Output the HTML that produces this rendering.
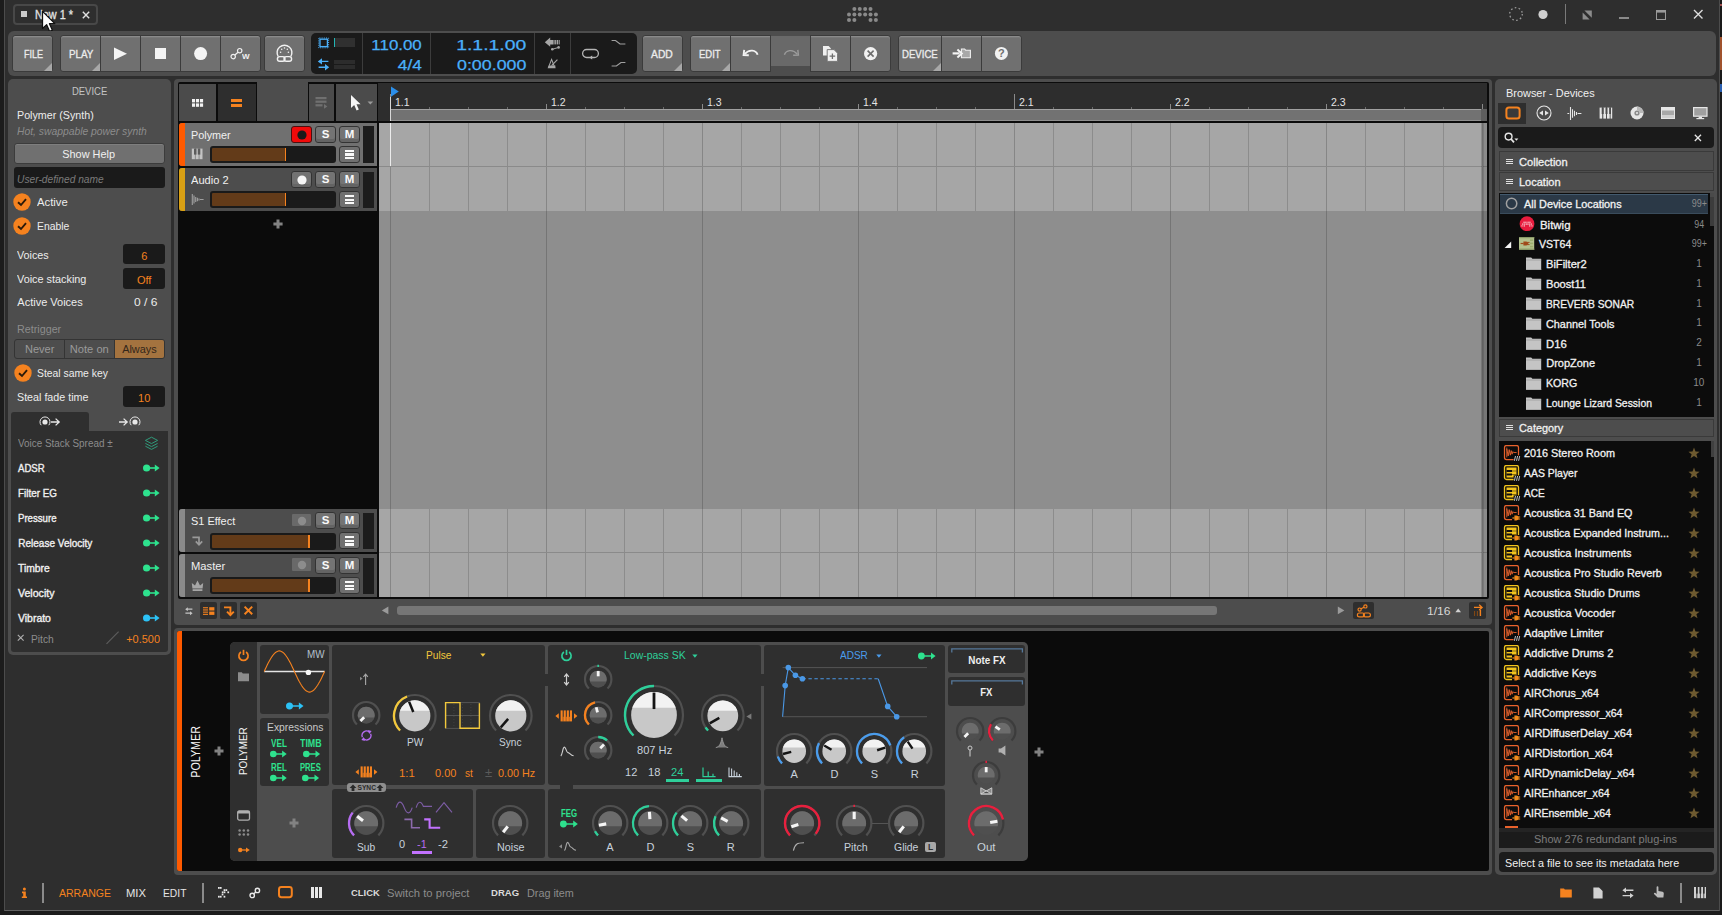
<!DOCTYPE html>
<html><head><meta charset="utf-8"><title>Bitwig Studio</title>
<style>
html,body{margin:0;padding:0;background:#1c1c1c;overflow:hidden;}
body{width:1722px;height:915px;position:relative;font-family:"Liberation Sans",sans-serif;}
#app div,#app span,#app svg{position:absolute;display:block;box-sizing:border-box;}
#app{position:absolute;left:0;top:0;width:1722px;height:915px;overflow:hidden;}
.t{white-space:nowrap;line-height:1;}
</style></head><body><div id="app">
<!-- frame -->
<div style="left:4px;top:0px;width:1716px;height:911px;background:#2e2e2e;border-left:1px solid #4c4c4c;border-bottom:1px solid #626262;border-right:1px solid #4c4c4c;"></div>
<div style="left:1720px;top:0px;width:2px;height:915px;background:#1a1a1a;"></div>
<div style="left:1720px;top:37px;width:2px;height:33px;background:#a0522d;"></div>
<div style="left:1720px;top:84px;width:2px;height:8px;background:#2a5fb0;"></div>
<div style="left:1720px;top:4px;width:2px;height:2px;background:#a05050;"></div>
<div style="left:13px;top:3.8px;width:85px;height:21.6px;background:transparent;border-radius:4px;border:2px solid #484848;"></div>
<div style="left:21px;top:11.3px;width:6.2px;height:5.9px;background:#cacaca;"></div>
<span class="t" style="top:8.52px;font-size:12px;color:#e4e4e4;left:35.00px;transform:scaleX(0.904);transform-origin:0 50%;-webkit-text-stroke:0.3px #e4e4e4;">New 1 *</span>
<svg style="left:82.4px;top:10.7px;" width="8" height="8" viewBox="0 0 8 8"><path d="M0.8 0.8L7.2 7.2M7.2 0.8L0.8 7.2" stroke="#e0e0e0" stroke-width="1.4" fill="none"/></svg>
<svg style="left:845px;top:5px;" width="36" height="20" viewBox="0 0 36 20"><g fill="#8a8a8a"><circle cx="9.38" cy="3.90" r="2"/><circle cx="14.76" cy="3.90" r="2"/><circle cx="20.14" cy="3.90" r="2"/><circle cx="25.52" cy="3.90" r="2"/><circle cx="4.00" cy="9.40" r="2"/><circle cx="9.38" cy="9.40" r="2"/><circle cx="14.76" cy="9.40" r="2"/><circle cx="20.14" cy="9.40" r="2"/><circle cx="25.52" cy="9.40" r="2"/><circle cx="30.90" cy="9.40" r="2"/><circle cx="4.00" cy="14.90" r="2"/><circle cx="9.38" cy="14.90" r="2"/><circle cx="25.52" cy="14.90" r="2"/><circle cx="30.90" cy="14.90" r="2"/></g></svg>
<svg style="left:1507px;top:5px;" width="18" height="18" viewBox="0 0 18 18"><circle cx="9" cy="9" r="6.3" fill="none" stroke="#9a9a9a" stroke-width="1.3" stroke-dasharray="1.6 2.35"/></svg>
<svg style="left:1537px;top:8px;" width="12" height="12" viewBox="0 0 12 12"><circle cx="6" cy="6.5" r="4.6" fill="#d0d0d0"/></svg>
<div style="left:1565px;top:4px;width:1px;height:20px;background:#7a7a7a;"></div>
<svg style="left:1581px;top:9px;" width="12" height="12" viewBox="0 0 12 12"><path d="M3.4 1.4H10.8V8.8Z" fill="#8c8c8c"/><path d="M1.6 3.6V10.6H8.6Z" fill="#8c8c8c"/></svg>
<div style="left:1619px;top:17px;width:10px;height:2px;background:#8a8a8a;"></div>
<svg style="left:1656px;top:10px;" width="11" height="11" viewBox="0 0 11 11"><rect x="0.5" y="0.5" width="9" height="9" fill="none" stroke="#9a9a9a" stroke-width="1"/><rect x="0" y="0" width="10" height="2.6" fill="#9a9a9a"/></svg>
<svg style="left:1693px;top:9px;" width="11" height="11" viewBox="0 0 11 11"><path d="M1 1L9.5 9.5M9.5 1L1 9.5" stroke="#dcdcdc" stroke-width="1.4" fill="none"/></svg>
<svg style="left:41px;top:10.4px;" width="16" height="24" viewBox="0 0 16 24"><g transform="translate(0.4,0.3) scale(1.12)"><path d="M1 1V16.2L4.7 12.8L7.3 18.8L9.8 17.7L7.2 11.9H12Z" fill="#fff" stroke="#111" stroke-width="1.1" stroke-linejoin="round"/></g></svg>
<!-- toolbar -->
<div style="left:8px;top:31px;width:1708px;height:45px;background:#4d4d4d;border-radius:6px;"></div>
<div style="left:12px;top:35px;width:41px;height:37px;background:#707070;border-radius:3px;border:1px solid #3b3b3b;box-shadow:inset 0 1px 0 #8a8a8a,inset 0 2px 0 #787878;"></div>
<svg style="left:44px;top:63px;" width="8" height="8" viewBox="0 0 8 8"><path d="M8 0V8H0Z" fill="#a8a8a8"/></svg>
<span class="t" style="top:49.50px;font-size:10px;color:#ececec;left:23.60px;transform:scaleX(0.900);transform-origin:0 50%;-webkit-text-stroke:0.3px #ececec;">FILE</span>
<div style="left:60px;top:35px;width:41px;height:37px;background:#707070;border-radius:3px 0 0 3px;border:1px solid #3b3b3b;box-shadow:inset 0 1px 0 #8a8a8a,inset 0 2px 0 #787878;"></div>
<svg style="left:92px;top:63px;" width="8" height="8" viewBox="0 0 8 8"><path d="M8 0V8H0Z" fill="#a8a8a8"/></svg>
<span class="t" style="top:49.50px;font-size:10px;color:#ececec;left:68.60px;transform:scaleX(0.983);transform-origin:0 50%;-webkit-text-stroke:0.3px #ececec;">PLAY</span>
<div style="left:100px;top:35px;width:41px;height:37px;background:#707070;border-radius:0;border:1px solid #3b3b3b;box-shadow:inset 0 1px 0 #8a8a8a,inset 0 2px 0 #787878;"></div>
<div style="left:140px;top:35px;width:41px;height:37px;background:#707070;border-radius:0;border:1px solid #3b3b3b;box-shadow:inset 0 1px 0 #8a8a8a,inset 0 2px 0 #787878;"></div>
<div style="left:180px;top:35px;width:41px;height:37px;background:#707070;border-radius:0;border:1px solid #3b3b3b;box-shadow:inset 0 1px 0 #8a8a8a,inset 0 2px 0 #787878;"></div>
<div style="left:220px;top:35px;width:41px;height:37px;background:#707070;border-radius:0 3px 3px 0;border:1px solid #3b3b3b;box-shadow:inset 0 1px 0 #8a8a8a,inset 0 2px 0 #787878;"></div>
<svg style="left:113px;top:46px;" width="16" height="16" viewBox="0 0 16 16"><path d="M1 1.6L14 7.8L1 14Z" fill="#f4f4f4"/></svg>
<div style="left:155.2px;top:48px;width:11.2px;height:11.2px;background:#f4f4f4;"></div>
<svg style="left:193px;top:46px;" width="16" height="16" viewBox="0 0 16 16"><circle cx="7.6" cy="7.6" r="6.5" fill="#f4f4f4"/></svg>
<svg style="left:229px;top:46px;" width="24" height="16" viewBox="0 0 24 16"><g fill="none" stroke="#f0f0f0" stroke-width="1.2"><circle cx="10.7" cy="4.7" r="2.2"/><circle cx="4.2" cy="10.6" r="2.2"/><path d="M5.9 9L9 6.3"/></g></svg>
<span class="t" style="top:52.88px;font-size:8px;color:#f0f0f0;font-weight:bold;left:242.30px;transform:scaleX(1.006);transform-origin:0 50%;">W</span>
<div style="left:264px;top:35px;width:41px;height:37px;background:#707070;border-radius:3px;border:1px solid #3b3b3b;box-shadow:inset 0 1px 0 #8a8a8a,inset 0 2px 0 #787878;"></div>
<svg style="left:275px;top:43px;" width="20" height="22" viewBox="0 0 20 22"><g fill="none" stroke="#f2f2f2" stroke-width="1.4"><path d="M3.2 13.5A7.4 7.4 0 1 1 15.8 13.5"/><rect x="2.4" y="13.6" width="7.6" height="4.6" rx="2.3"/><rect x="9" y="13.6" width="7.6" height="4.6" rx="2.3"/></g><g fill="#f2f2f2"><circle cx="5.6" cy="9.2" r="0.8"/><circle cx="6.7" cy="6.3" r="0.8"/><circle cx="9.5" cy="5" r="0.8"/><circle cx="12.3" cy="6.3" r="0.8"/><circle cx="13.4" cy="9.2" r="0.8"/></g></svg>
<div style="left:311px;top:33px;width:325.5px;height:41px;background:#1a1a1a;border-radius:5px;"></div>
<div style="left:362.1px;top:33px;width:1.0px;height:41px;background:#3c3c3c;"></div>
<div style="left:430.1px;top:33px;width:1.0px;height:41px;background:#3c3c3c;"></div>
<div style="left:534.3px;top:33px;width:1.0px;height:41px;background:#3c3c3c;"></div>
<div style="left:570.1px;top:33px;width:1.0px;height:41px;background:#3c3c3c;"></div>
<svg style="left:317px;top:36px;" width="14" height="14" viewBox="0 0 14 14"><rect x="3" y="3.2" width="7.4" height="7.4" fill="none" stroke="#4ab0fa" stroke-width="1.3"/><rect x="1.8" y="2" width="9.8" height="9.8" fill="none" stroke="#4ab0fa" stroke-width="1" stroke-dasharray="1 1.2" stroke-dashoffset="-0.6"/></svg>
<div style="left:334px;top:38px;width:21px;height:9px;background:#303030;"></div>
<div style="left:334px;top:38px;width:1.2px;height:9px;background:#22b5b5;"></div>
<svg style="left:317px;top:58px;" width="14" height="13" viewBox="0 0 14 13"><g fill="#4ab0fa"><path d="M0.8 3.4L5 0.2V2.7H11.4V4.1H5V6.6Z"/><path d="M12.2 9.2L8 6V8.5H1.6V9.9H8V12.4Z"/></g></svg>
<div style="left:334px;top:60.2px;width:21px;height:3.8px;background:#2c2c2c;"></div>
<div style="left:334px;top:65.1px;width:21px;height:3.9px;background:#2c2c2c;"></div>
<span class="t" style="top:36.95px;font-size:15px;color:#4ab0fa;left:377.23px;transform:scaleX(1.126);transform-origin:100% 50%;-webkit-text-stroke:0.25px #4ab0fa;">110.00</span>
<span class="t" style="top:57.25px;font-size:15px;color:#4ab0fa;left:400.55px;transform:scaleX(1.151);transform-origin:100% 50%;-webkit-text-stroke:0.25px #4ab0fa;">4/4</span>
<span class="t" style="top:36.95px;font-size:15px;color:#4ab0fa;left:471.79px;transform:scaleX(1.291);transform-origin:100% 50%;-webkit-text-stroke:0.25px #4ab0fa;">1.1.1.00</span>
<span class="t" style="top:57.25px;font-size:15px;color:#4ab0fa;left:467.61px;transform:scaleX(1.189);transform-origin:100% 50%;-webkit-text-stroke:0.25px #4ab0fa;">0:00.000</span>
<svg style="left:544px;top:36px;" width="18" height="16" viewBox="0 0 18 16"><g fill="#a6a6a6"><path d="M0.8 6.2L6.2 1.6V4H9.6V8.4H6.2V10.8Z"/><rect x="10.4" y="4" width="1.5" height="4.4"/><rect x="12.6" y="4" width="1.5" height="4.4"/><rect x="14.7" y="4" width="1" height="4.4"/><circle cx="8.3" cy="13.3" r="1.3"/><circle cx="14.6" cy="11.4" r="1.3"/></g><path d="M8.3 13.3L14.6 11.4" stroke="#a6a6a6" stroke-width="1"/></svg>
<svg style="left:547px;top:57px;" width="12" height="12" viewBox="0 0 12 12"><path d="M1.4 10.6L4.6 2.4L7.8 10.6Z" fill="none" stroke="#a6a6a6" stroke-width="1.1"/><path d="M1 10.8H8.4V8.6H1.8Z" fill="#a6a6a6"/><path d="M4.6 8.6L10.4 2.6" stroke="#a6a6a6" stroke-width="1.1"/></svg>
<svg style="left:581px;top:47px;" width="20" height="13" viewBox="0 0 20 13"><path d="M9 10.5H5.6A4 4 0 0 1 5.6 2.5H13.4A4 4 0 0 1 13.4 10.5H10" fill="none" stroke="#b4b4b4" stroke-width="1.3"/><path d="M8 10.6L11.2 8.4V12.6Z" fill="#b4b4b4"/></svg>
<svg style="left:611px;top:39px;" width="16" height="7" viewBox="0 0 16 7"><path d="M0.6 1.5H4.5L9 5H14.4" fill="none" stroke="#a0a0a0" stroke-width="1.2"/></svg>
<svg style="left:611px;top:61px;" width="16" height="7" viewBox="0 0 16 7"><path d="M0.6 5H5.4L10 1.5H14.4" fill="none" stroke="#a0a0a0" stroke-width="1.2"/></svg>
<div style="left:642px;top:35px;width:41px;height:37px;background:#707070;border-radius:3px;border:1px solid #3b3b3b;box-shadow:inset 0 1px 0 #8a8a8a,inset 0 2px 0 #787878;"></div>
<svg style="left:674px;top:63px;" width="8" height="8" viewBox="0 0 8 8"><path d="M8 0V8H0Z" fill="#a8a8a8"/></svg>
<span class="t" style="top:49.50px;font-size:10px;color:#ececec;left:651.30px;transform:scaleX(1.032);transform-origin:0 50%;-webkit-text-stroke:0.3px #ececec;">ADD</span>
<div style="left:690px;top:35px;width:41px;height:37px;background:#707070;border-radius:3px 0 0 3px;border:1px solid #3b3b3b;box-shadow:inset 0 1px 0 #8a8a8a,inset 0 2px 0 #787878;"></div>
<svg style="left:722px;top:63px;" width="8" height="8" viewBox="0 0 8 8"><path d="M8 0V8H0Z" fill="#a8a8a8"/></svg>
<span class="t" style="top:49.50px;font-size:10px;color:#ececec;left:699.40px;transform:scaleX(0.948);transform-origin:0 50%;-webkit-text-stroke:0.3px #ececec;">EDIT</span>
<div style="left:730px;top:35px;width:41px;height:37px;background:#707070;border-radius:0;border:1px solid #3b3b3b;box-shadow:inset 0 1px 0 #8a8a8a,inset 0 2px 0 #787878;"></div>
<div style="left:771px;top:36px;width:39px;height:30px;background:#696969;"></div>
<div style="left:810px;top:35px;width:41px;height:37px;background:#707070;border-radius:0;border:1px solid #3b3b3b;box-shadow:inset 0 1px 0 #8a8a8a,inset 0 2px 0 #787878;"></div>
<div style="left:850px;top:35px;width:41px;height:37px;background:#707070;border-radius:0 3px 3px 0;border:1px solid #3b3b3b;box-shadow:inset 0 1px 0 #8a8a8a,inset 0 2px 0 #787878;"></div>
<svg style="left:741px;top:46px;" width="20" height="14" viewBox="0 0 20 14"><path d="M16.6 8.8C15 4.2 8.4 2.6 3.6 8.2" fill="none" stroke="#f2f2f2" stroke-width="1.9"/><path d="M3.2 3.8L2.6 9L7.8 9.2" fill="none" stroke="#f2f2f2" stroke-width="1.9"/></svg>
<svg style="left:781px;top:46px;" width="20" height="14" viewBox="0 0 20 14"><path d="M3.4 8.8C5 4.2 11.6 2.6 16.4 8.2" fill="none" stroke="#9c9c9c" stroke-width="1.4"/><path d="M16.8 3.8L17.4 9L12.2 9.2" fill="none" stroke="#9c9c9c" stroke-width="1.4"/></svg>
<svg style="left:822px;top:45px;" width="18" height="18" viewBox="0 0 18 18"><path d="M1 1H6.6L9 3.4V10.5H1Z" fill="#f0f0f0"/><path d="M5.2 4.6H12L15.6 8.2V16.4H5.2Z" fill="#f0f0f0" stroke="#6f6f6f" stroke-width="0.9"/><path d="M10.4 8.4V14M7.6 11.2H13.2" stroke="#6f6f6f" stroke-width="1.3"/></svg>
<svg style="left:863px;top:46px;" width="16" height="16" viewBox="0 0 16 16"><circle cx="7.6" cy="7.6" r="6.6" fill="#f2f2f2"/><path d="M4.6 4.6L10.6 10.6M10.6 4.6L4.6 10.6" stroke="#6f6f6f" stroke-width="1.6"/></svg>
<div style="left:898px;top:35px;width:44px;height:37px;background:#707070;border-radius:3px 0 0 3px;border:1px solid #3b3b3b;box-shadow:inset 0 1px 0 #8a8a8a,inset 0 2px 0 #787878;"></div>
<svg style="left:933px;top:63px;" width="8" height="8" viewBox="0 0 8 8"><path d="M8 0V8H0Z" fill="#a8a8a8"/></svg>
<span class="t" style="top:49.50px;font-size:10px;color:#ececec;left:902.30px;transform:scaleX(0.959);transform-origin:0 50%;-webkit-text-stroke:0.3px #ececec;">DEVICE</span>
<div style="left:941px;top:35px;width:41px;height:37px;background:#707070;border-radius:0;border:1px solid #3b3b3b;box-shadow:inset 0 1px 0 #8a8a8a,inset 0 2px 0 #787878;"></div>
<div style="left:981px;top:35px;width:41px;height:37px;background:#707070;border-radius:0 3px 3px 0;border:1px solid #3b3b3b;box-shadow:inset 0 1px 0 #8a8a8a,inset 0 2px 0 #787878;"></div>
<svg style="left:951px;top:46px;" width="22" height="14" viewBox="0 0 22 14"><path d="M10.4 3H13.6L14.6 4.2H19.4V11.8H10.4Z" fill="#a8a8a8" stroke="#f0f0f0" stroke-width="1.1"/><path d="M1.6 7.4H8.6" stroke="#f4f4f4" stroke-width="2.2"/><path d="M6.4 3.4L10.8 7.4L6.4 11.4" fill="none" stroke="#f4f4f4" stroke-width="2"/></svg>
<svg style="left:994px;top:46px;" width="16" height="16" viewBox="0 0 16 16"><circle cx="7.4" cy="7.4" r="6.5" fill="#f2f2f2"/></svg>
<span class="t" style="top:48.21px;font-size:11px;color:#6f6f6f;font-weight:bold;left:998.04px;">?</span>
<!-- left -->
<div style="left:8px;top:79px;width:163px;height:576px;background:#4d4d4d;border-radius:5px;"></div>
<span class="t" style="top:86.70px;font-size:10px;color:#c4c4c4;left:71.38px;transform:scaleX(0.951);transform-origin:50% 50%;">DEVICE</span>
<span class="t" style="top:109.61px;font-size:11px;color:#ececec;left:17.30px;transform:scaleX(0.973);transform-origin:0 50%;">Polymer (Synth)</span>
<span class="t" style="top:125.61px;font-size:11px;color:#8c8c8c;font-style:italic;left:17.30px;transform:scaleX(0.939);transform-origin:0 50%;">Hot, swappable power synth</span>
<div style="left:14px;top:143px;width:151px;height:21px;background:#707070;border-radius:3px;border:1px solid #3c3c3c;box-shadow:inset 0 1px 0 #7e7e7e;"></div>
<span class="t" style="top:148.61px;font-size:11px;color:#f0f0f0;left:61.90px;transform:scaleX(0.991);transform-origin:50% 50%;">Show Help</span>
<div style="left:14px;top:167.2px;width:151px;height:20.6px;background:#1a1a1a;border-radius:3px;"></div>
<span class="t" style="top:173.61px;font-size:11px;color:#7a7a7a;font-style:italic;left:17.30px;transform:scaleX(0.929);transform-origin:0 50%;">User-defined name</span>
<svg style="left:13.399999999999999px;top:192.7px;" width="18" height="18" viewBox="0 0 18 18"><circle cx="9" cy="9" r="8.7" fill="#f5821f"/><path d="M5 9.2L8 12L13 6.2" fill="none" stroke="#2a1a0a" stroke-width="1.9"/></svg>
<span class="t" style="top:196.61px;font-size:11px;color:#ececec;left:37.00px;transform:scaleX(1.025);transform-origin:0 50%;">Active</span>
<svg style="left:13.399999999999999px;top:216.7px;" width="18" height="18" viewBox="0 0 18 18"><circle cx="9" cy="9" r="8.7" fill="#f5821f"/><path d="M5 9.2L8 12L13 6.2" fill="none" stroke="#2a1a0a" stroke-width="1.9"/></svg>
<span class="t" style="top:220.61px;font-size:11px;color:#ececec;left:37.00px;transform:scaleX(0.943);transform-origin:0 50%;">Enable</span>
<span class="t" style="top:249.91px;font-size:11px;color:#ececec;left:17.30px;transform:scaleX(0.978);transform-origin:0 50%;">Voices</span>
<div style="left:123.2px;top:244.2px;width:41.6px;height:20.3px;background:#1a1a1a;border-radius:3px;"></div>
<span class="t" style="top:250.61px;font-size:11px;color:#f5821f;left:141.14px;">6</span>
<span class="t" style="top:274.01px;font-size:11px;color:#ececec;left:17.30px;transform:scaleX(0.987);transform-origin:0 50%;">Voice stacking</span>
<div style="left:123.2px;top:268.2px;width:41.6px;height:20.4px;background:#1a1a1a;border-radius:3px;"></div>
<span class="t" style="top:274.61px;font-size:11px;color:#f5821f;left:136.96px;">Off</span>
<span class="t" style="top:296.61px;font-size:11px;color:#ececec;left:17.30px;">Active Voices</span>
<span class="t" style="top:296.61px;font-size:11px;color:#ececec;left:133.80px;transform:scaleX(1.093);transform-origin:0 50%;">0 / 6</span>
<span class="t" style="top:323.61px;font-size:11px;color:#8c8c8c;left:17.30px;transform:scaleX(0.977);transform-origin:0 50%;">Retrigger</span>
<div style="left:14.2px;top:338.7px;width:150.6px;height:20.0px;background:#4d4d4d;border-radius:3px;border:1px solid #343434;"></div>
<div style="left:114.7px;top:339.7px;width:49.1px;height:18.0px;background:#a4733f;border-radius:0 2px 2px 0;"></div>
<div style="left:64.2px;top:339.7px;width:1.0px;height:18.0px;background:#343434;"></div>
<div style="left:114.2px;top:339.7px;width:1.0px;height:18.0px;background:#343434;"></div>
<span class="t" style="top:343.61px;font-size:11px;color:#9a9a9a;left:25.33px;transform:scaleX(1.005);transform-origin:50% 50%;">Never</span>
<span class="t" style="top:343.61px;font-size:11px;color:#9a9a9a;left:70.24px;transform:scaleX(1.012);transform-origin:50% 50%;">Note on</span>
<span class="t" style="top:343.61px;font-size:11px;color:#33261a;left:121.88px;transform:scaleX(0.990);transform-origin:50% 50%;">Always</span>
<svg style="left:13.5px;top:364px;" width="18" height="18" viewBox="0 0 18 18"><circle cx="9" cy="9" r="8.7" fill="#f5821f"/><path d="M5 9.2L8 12L13 6.2" fill="none" stroke="#2a1a0a" stroke-width="1.9"/></svg>
<span class="t" style="top:367.61px;font-size:11px;color:#ececec;left:37.40px;transform:scaleX(0.943);transform-origin:0 50%;">Steal same key</span>
<span class="t" style="top:391.81px;font-size:11px;color:#ececec;left:17.30px;transform:scaleX(0.974);transform-origin:0 50%;">Steal fade time</span>
<div style="left:123.2px;top:386.2px;width:41.6px;height:20.6px;background:#1a1a1a;border-radius:3px;"></div>
<span class="t" style="top:392.61px;font-size:11px;color:#f5821f;left:138.08px;">10</span>
<div style="left:11px;top:412px;width:78px;height:20px;background:#2f2f2f;border-radius:3px 3px 0 0;"></div>
<div style="left:11px;top:431px;width:157px;height:220.5px;background:#2f2f2f;border-radius:0 0 3px 3px;"></div>
<svg style="left:39px;top:415px;" width="24" height="14" viewBox="0 0 24 14"><circle cx="6" cy="7" r="2.6" fill="#e8e8e8"/><path d="M2.2 10.2A5 5 0 1 1 9.8 10.2" fill="none" stroke="#e8e8e8" stroke-width="1"/><path d="M12 7H20M16.6 3.6L20.2 7L16.6 10.4" fill="none" stroke="#e8e8e8" stroke-width="1.3"/></svg>
<svg style="left:117px;top:415px;" width="24" height="14" viewBox="0 0 24 14"><circle cx="18" cy="7" r="2.6" fill="#e8e8e8"/><path d="M14.2 10.2A5 5 0 1 1 21.8 10.2" fill="none" stroke="#e8e8e8" stroke-width="1"/><path d="M2 7H10M6.6 3.6L10.2 7L6.6 10.4" fill="none" stroke="#e8e8e8" stroke-width="1.3"/></svg>
<span class="t" style="top:438.60px;font-size:10px;color:#8c8c8c;left:18.40px;transform:scaleX(0.990);transform-origin:0 50%;">Voice Stack Spread ±</span>
<svg style="left:144px;top:436px;" width="15" height="15" viewBox="0 0 15 15"><g fill="none" stroke="#2f9a7a" stroke-width="1"><path d="M7.5 1.2L13.6 4.4L7.5 7.6L1.4 4.4Z"/><path d="M1.4 7.4L7.5 10.6L13.6 7.4"/><path d="M1.4 10.2L7.5 13.4L13.6 10.2"/></g></svg>
<span class="t" style="top:463.50px;font-size:10px;color:#f0f0f0;left:18.30px;transform:scaleX(0.961);transform-origin:0 50%;-webkit-text-stroke:0.35px #f0f0f0;">ADSR</span>
<svg style="left:142px;top:462.79999999999995px;" width="20" height="10" viewBox="0 0 20 10"><circle cx="4.6" cy="5" r="3.6" fill="#2ee28e"/><path d="M7 5H14" fill="none" stroke="#2ee28e" stroke-width="1.6"/><path d="M12.8 1.5L17.6 5L12.8 8.5Z" fill="#2ee28e"/></svg>
<span class="t" style="top:488.50px;font-size:10px;color:#f0f0f0;left:18.30px;transform:scaleX(0.986);transform-origin:0 50%;-webkit-text-stroke:0.35px #f0f0f0;">Filter EG</span>
<svg style="left:142px;top:487.79999999999995px;" width="20" height="10" viewBox="0 0 20 10"><circle cx="4.6" cy="5" r="3.6" fill="#2ee28e"/><path d="M7 5H14" fill="none" stroke="#2ee28e" stroke-width="1.6"/><path d="M12.8 1.5L17.6 5L12.8 8.5Z" fill="#2ee28e"/></svg>
<span class="t" style="top:513.70px;font-size:10px;color:#f0f0f0;left:18.30px;transform:scaleX(0.962);transform-origin:0 50%;-webkit-text-stroke:0.35px #f0f0f0;">Pressure</span>
<svg style="left:142px;top:513.0px;" width="20" height="10" viewBox="0 0 20 10"><circle cx="4.6" cy="5" r="3.6" fill="#2ee28e"/><path d="M7 5H14" fill="none" stroke="#2ee28e" stroke-width="1.6"/><path d="M12.8 1.5L17.6 5L12.8 8.5Z" fill="#2ee28e"/></svg>
<span class="t" style="top:538.80px;font-size:10px;color:#f0f0f0;left:18.30px;-webkit-text-stroke:0.35px #f0f0f0;">Release Velocity</span>
<svg style="left:142px;top:538.1px;" width="20" height="10" viewBox="0 0 20 10"><circle cx="4.6" cy="5" r="3.6" fill="#2ee28e"/><path d="M7 5H14" fill="none" stroke="#2ee28e" stroke-width="1.6"/><path d="M12.8 1.5L17.6 5L12.8 8.5Z" fill="#2ee28e"/></svg>
<span class="t" style="top:563.80px;font-size:10px;color:#f0f0f0;left:18.30px;transform:scaleX(1.031);transform-origin:0 50%;-webkit-text-stroke:0.35px #f0f0f0;">Timbre</span>
<svg style="left:142px;top:563.1px;" width="20" height="10" viewBox="0 0 20 10"><circle cx="4.6" cy="5" r="3.6" fill="#2ee28e"/><path d="M7 5H14" fill="none" stroke="#2ee28e" stroke-width="1.6"/><path d="M12.8 1.5L17.6 5L12.8 8.5Z" fill="#2ee28e"/></svg>
<span class="t" style="top:588.50px;font-size:10px;color:#f0f0f0;left:18.30px;transform:scaleX(1.059);transform-origin:0 50%;-webkit-text-stroke:0.35px #f0f0f0;">Velocity</span>
<svg style="left:142px;top:587.8px;" width="20" height="10" viewBox="0 0 20 10"><circle cx="4.6" cy="5" r="3.6" fill="#2ee28e"/><path d="M7 5H14" fill="none" stroke="#2ee28e" stroke-width="1.6"/><path d="M12.8 1.5L17.6 5L12.8 8.5Z" fill="#2ee28e"/></svg>
<span class="t" style="top:613.60px;font-size:10px;color:#f0f0f0;left:18.30px;transform:scaleX(1.044);transform-origin:0 50%;-webkit-text-stroke:0.35px #f0f0f0;">Vibrato</span>
<svg style="left:142px;top:612.9px;" width="20" height="10" viewBox="0 0 20 10"><circle cx="4.6" cy="5" r="3.6" fill="#2cc2f6"/><path d="M7 5H14" fill="none" stroke="#2cc2f6" stroke-width="1.6"/><path d="M12.8 1.5L17.6 5L12.8 8.5Z" fill="#2cc2f6"/></svg>
<svg style="left:17px;top:634px;" width="8" height="8" viewBox="0 0 8 8"><path d="M0.8 0.8L6.6 6.6M6.6 0.8L0.8 6.6" stroke="#b0b0b0" stroke-width="1.1"/></svg>
<span class="t" style="top:633.51px;font-size:11px;color:#8c8c8c;left:31.30px;transform:scaleX(0.932);transform-origin:0 50%;">Pitch</span>
<svg style="left:105px;top:630px;" width="16" height="16" viewBox="0 0 16 16"><path d="M1.5 13.8L13.6 1.6" stroke="#5c5c5c" stroke-width="1.2"/></svg>
<span class="t" style="top:633.51px;font-size:11px;color:#f5821f;left:126.45px;transform:scaleX(0.993);transform-origin:100% 50%;">+0.500</span>
<!-- arranger -->
<div style="left:174.4px;top:78.6px;width:1317.6px;height:546.4px;background:#4d4d4d;border-radius:4px;"></div>
<div style="left:177.9px;top:82px;width:1311.5px;height:517px;background:#0b0b0b;border-radius:2px;"></div>
<div style="left:179px;top:84px;width:37.3px;height:36.6px;background:#4b4b4b;"></div>
<div style="left:218px;top:84px;width:37.8px;height:36.6px;background:#2e2e2e;"></div>
<div style="left:257px;top:80px;width:50.5px;height:40.6px;background:#4d4d4d;"></div>
<div style="left:309px;top:84px;width:25.2px;height:36.6px;background:#4b4b4b;"></div>
<div style="left:335.8px;top:84px;width:41.2px;height:36.6px;background:#4b4b4b;"></div>
<svg style="left:192px;top:98.6px;" width="12" height="9" viewBox="0 0 12 9"><g fill="#f2f2f2"><rect x="0" y="0.0" width="3.1" height="3.4"/><rect x="4" y="0.0" width="3.1" height="3.4"/><rect x="8" y="0.0" width="3.1" height="3.4"/><rect x="0" y="4.4" width="3.1" height="3.4"/><rect x="4" y="4.4" width="3.1" height="3.4"/><rect x="8" y="4.4" width="3.1" height="3.4"/></g></svg>
<div style="left:231px;top:99px;width:11.2px;height:2.7px;background:#f5821f;"></div>
<div style="left:231px;top:104px;width:11.2px;height:2.7px;background:#f5821f;"></div>
<svg style="left:315px;top:96px;" width="14" height="14" viewBox="0 0 14 14"><g fill="#707070"><rect x="0.5" y="1" width="11" height="2.2"/><rect x="0.5" y="4.6" width="11" height="2.2"/><rect x="0.5" y="8.2" width="7" height="2.2"/><path d="M9 8L12.4 10.4L9 12.8Z"/></g></svg>
<svg style="left:350px;top:94px;" width="13" height="19" viewBox="0 0 13 19"><path d="M1 1V14L4.2 11L6.6 16.4L8.8 15.4L6.5 10.2H10.6Z" fill="#f6f6f6"/></svg>
<svg style="left:367px;top:100.5px;" width="7" height="4" viewBox="0 0 7 4"><path d="M0.5 0.5H6.2L3.35 3.4Z" fill="#9a9a9a"/></svg>
<div style="left:378.4px;top:83.3px;width:1108.6px;height:37.7px;background:#2d2d2d;"></div>
<div style="left:390px;top:94px;width:1px;height:15px;background:#8a8a8a;"></div>
<div style="left:429px;top:106.6px;width:1px;height:2.4px;background:#6a6a6a;"></div>
<div style="left:468px;top:106.6px;width:1px;height:2.4px;background:#6a6a6a;"></div>
<div style="left:507px;top:106.6px;width:1px;height:2.4px;background:#6a6a6a;"></div>
<div style="left:546px;top:104px;width:1px;height:5px;background:#8a8a8a;"></div>
<div style="left:585px;top:106.6px;width:1px;height:2.4px;background:#6a6a6a;"></div>
<div style="left:624px;top:106.6px;width:1px;height:2.4px;background:#6a6a6a;"></div>
<div style="left:663px;top:106.6px;width:1px;height:2.4px;background:#6a6a6a;"></div>
<div style="left:702px;top:104px;width:1px;height:5px;background:#8a8a8a;"></div>
<div style="left:741px;top:106.6px;width:1px;height:2.4px;background:#6a6a6a;"></div>
<div style="left:780px;top:106.6px;width:1px;height:2.4px;background:#6a6a6a;"></div>
<div style="left:819px;top:106.6px;width:1px;height:2.4px;background:#6a6a6a;"></div>
<div style="left:858px;top:104px;width:1px;height:5px;background:#8a8a8a;"></div>
<div style="left:897px;top:106.6px;width:1px;height:2.4px;background:#6a6a6a;"></div>
<div style="left:936px;top:106.6px;width:1px;height:2.4px;background:#6a6a6a;"></div>
<div style="left:975px;top:106.6px;width:1px;height:2.4px;background:#6a6a6a;"></div>
<div style="left:1014px;top:94px;width:1px;height:15px;background:#8a8a8a;"></div>
<div style="left:1053px;top:106.6px;width:1px;height:2.4px;background:#6a6a6a;"></div>
<div style="left:1092px;top:106.6px;width:1px;height:2.4px;background:#6a6a6a;"></div>
<div style="left:1131px;top:106.6px;width:1px;height:2.4px;background:#6a6a6a;"></div>
<div style="left:1170px;top:104px;width:1px;height:5px;background:#8a8a8a;"></div>
<div style="left:1209px;top:106.6px;width:1px;height:2.4px;background:#6a6a6a;"></div>
<div style="left:1248px;top:106.6px;width:1px;height:2.4px;background:#6a6a6a;"></div>
<div style="left:1287px;top:106.6px;width:1px;height:2.4px;background:#6a6a6a;"></div>
<div style="left:1326px;top:104px;width:1px;height:5px;background:#8a8a8a;"></div>
<div style="left:1365px;top:106.6px;width:1px;height:2.4px;background:#6a6a6a;"></div>
<div style="left:1404px;top:106.6px;width:1px;height:2.4px;background:#6a6a6a;"></div>
<div style="left:1443px;top:106.6px;width:1px;height:2.4px;background:#6a6a6a;"></div>
<div style="left:1482px;top:104px;width:1px;height:5px;background:#8a8a8a;"></div>
<div style="left:391px;top:109px;width:1096px;height:11.6px;background:#727272;border-radius:0;border-top:1px solid #a0a0a0;border-bottom:1px solid #8e8e8e;"></div>
<div style="left:1480.5px;top:109px;width:6.5px;height:11.6px;background:#5e5e5e;"></div>
<span class="t" style="top:97.11px;font-size:11px;color:#e4e4e4;left:394.50px;transform:scaleX(0.955);transform-origin:0 50%;">1.1</span>
<span class="t" style="top:97.11px;font-size:11px;color:#e4e4e4;left:550.50px;transform:scaleX(0.955);transform-origin:0 50%;">1.2</span>
<span class="t" style="top:97.11px;font-size:11px;color:#e4e4e4;left:706.50px;transform:scaleX(0.955);transform-origin:0 50%;">1.3</span>
<span class="t" style="top:97.11px;font-size:11px;color:#e4e4e4;left:862.50px;transform:scaleX(0.955);transform-origin:0 50%;">1.4</span>
<span class="t" style="top:97.11px;font-size:11px;color:#e4e4e4;left:1018.50px;transform:scaleX(0.955);transform-origin:0 50%;">2.1</span>
<span class="t" style="top:97.11px;font-size:11px;color:#e4e4e4;left:1174.50px;transform:scaleX(0.955);transform-origin:0 50%;">2.2</span>
<span class="t" style="top:97.11px;font-size:11px;color:#e4e4e4;left:1330.50px;transform:scaleX(0.955);transform-origin:0 50%;">2.3</span>
<svg style="left:390px;top:86px;" width="10" height="12" viewBox="0 0 10 12"><path d="M1 0.6L8.8 5.6L1 10.8Z" fill="#2b8fea"/></svg>
<div style="left:379px;top:123px;width:1108px;height:43.400000000000006px;background:linear-gradient(90deg,#868686 0,#868686 1px,transparent 1px) 11px 0/156px 100% repeat-x,linear-gradient(90deg,#8c8c8c 0,#8c8c8c 1px,transparent 1px) 11px 0/39px 100% repeat-x,#a6a6a6;"></div>
<div style="left:379px;top:166.4px;width:1108px;height:1.0px;background:#8a8a8a;"></div>
<div style="left:379px;top:167.4px;width:1108px;height:43.599999999999994px;background:linear-gradient(90deg,#868686 0,#868686 1px,transparent 1px) 11px 0/156px 100% repeat-x,linear-gradient(90deg,#8c8c8c 0,#8c8c8c 1px,transparent 1px) 11px 0/39px 100% repeat-x,#a6a6a6;"></div>
<div style="left:379px;top:211px;width:1108px;height:297.8px;background:linear-gradient(90deg,#757575 0,#757575 1px,transparent 1px) 11px 0/156px 100% repeat-x,#8e8e8e;"></div>
<div style="left:379px;top:508.8px;width:1108px;height:43.19999999999999px;background:linear-gradient(90deg,#868686 0,#868686 1px,transparent 1px) 11px 0/156px 100% repeat-x,linear-gradient(90deg,#8c8c8c 0,#8c8c8c 1px,transparent 1px) 11px 0/39px 100% repeat-x,#a6a6a6;"></div>
<div style="left:379px;top:552px;width:1108px;height:1px;background:#8a8a8a;"></div>
<div style="left:379px;top:553px;width:1108px;height:43.799999999999955px;background:linear-gradient(90deg,#868686 0,#868686 1px,transparent 1px) 11px 0/156px 100% repeat-x,linear-gradient(90deg,#8c8c8c 0,#8c8c8c 1px,transparent 1px) 11px 0/39px 100% repeat-x,#a6a6a6;"></div>
<div style="left:1480.5px;top:123px;width:6.5px;height:473.8px;background:rgba(0,0,0,0.16);"></div>
<div style="left:1483px;top:123px;width:1px;height:473.8px;background:rgba(0,0,0,0.12);"></div>
<div style="left:390.2px;top:97px;width:1.2px;height:23.6px;background:#d8d8d8;"></div>
<div style="left:390.2px;top:123px;width:1.2px;height:43.4px;background:#ececec;"></div>
<div style="left:179px;top:123px;width:198.3px;height:43px;background:#707070;border-radius:3px 0 0 3px;"></div>
<div style="left:179px;top:123px;width:6.2px;height:43px;background:#ff5a00;border-radius:3px 0 0 3px;"></div>
<span class="t" style="top:130.11px;font-size:11px;color:#f0f0f0;left:191.20px;transform:scaleX(0.984);transform-origin:0 50%;">Polymer</span>
<div style="left:291px;top:126px;width:21px;height:17px;background:#f20a0a;border-radius:3px;border:1px solid #4a1010;"></div>
<svg style="left:296.5px;top:129.5px;" width="10" height="10" viewBox="0 0 10 10"><circle cx="5" cy="5" r="4.6" fill="#1a1a1a"/></svg>
<div style="left:315px;top:126px;width:21px;height:17px;background:#747474;border-radius:3px;border:1px solid #333;box-shadow:inset 0 -3px 0 #646464;"></div>
<span class="t" style="top:128.87px;font-size:11.5px;color:#fafafa;font-weight:bold;left:321.66px;">S</span>
<div style="left:339px;top:126px;width:21px;height:17px;background:#747474;border-radius:3px;border:1px solid #333;box-shadow:inset 0 -3px 0 #646464;"></div>
<span class="t" style="top:128.87px;font-size:11.5px;color:#fafafa;font-weight:bold;left:344.71px;">M</span>
<div style="left:363.2px;top:126.4px;width:10.8px;height:36.6px;background:#1c1c1c;"></div>
<div style="left:210px;top:146.2px;width:126px;height:17.0px;background:#1a1a1a;border-radius:3px;"></div>
<div style="left:212px;top:148.2px;width:74.2px;height:13.0px;background:#633b19;border-radius:1px;"></div>
<div style="left:284.75px;top:148.2px;width:1.45px;height:13.0px;background:#f5821f;"></div>
<div style="left:339px;top:146px;width:21px;height:17px;background:#707070;border-radius:3px;border:1px solid #333;"></div>
<div style="left:344.7px;top:149.85px;width:9.6px;height:2.1px;background:#fafafa;"></div>
<div style="left:344.7px;top:153.45px;width:9.6px;height:2.1px;background:#fafafa;"></div>
<div style="left:344.7px;top:157.04999999999998px;width:9.6px;height:2.1px;background:#fafafa;"></div>
<svg style="left:191px;top:147.5px;" width="14" height="14" viewBox="0 0 14 14"><g fill="#c4c4c4"><rect x="0.8" y="0.6" width="3.1" height="10.6"/><rect x="4.6" y="0.6" width="3.1" height="10.6"/><rect x="8.4" y="0.6" width="3.1" height="10.6"/></g><g fill="#5c5c5c"><rect x="3" y="0.6" width="2.5" height="6"/><rect x="6.8" y="0.6" width="2.5" height="6"/></g></svg>
<div style="left:179px;top:168.2px;width:198.3px;height:43.0px;background:#4d4d4d;border-radius:3px 0 0 3px;"></div>
<div style="left:179px;top:168.2px;width:6.2px;height:43.0px;background:#d9a014;border-radius:3px 0 0 3px;"></div>
<span class="t" style="top:174.71px;font-size:11px;color:#f0f0f0;left:191.20px;transform:scaleX(1.008);transform-origin:0 50%;">Audio 2</span>
<div style="left:291px;top:171.2px;width:21px;height:17.0px;background:#727272;border-radius:3px;border:1px solid #333;box-shadow:inset 0 -3px 0 #666;"></div>
<svg style="left:296.5px;top:174.7px;" width="10" height="10" viewBox="0 0 10 10"><circle cx="5" cy="5" r="4.6" fill="#f6f6f6"/></svg>
<div style="left:315px;top:171.2px;width:21px;height:17.0px;background:#747474;border-radius:3px;border:1px solid #333;box-shadow:inset 0 -3px 0 #646464;"></div>
<span class="t" style="top:174.06px;font-size:11.5px;color:#fafafa;font-weight:bold;left:321.66px;">S</span>
<div style="left:339px;top:171.2px;width:21px;height:17.0px;background:#747474;border-radius:3px;border:1px solid #333;box-shadow:inset 0 -3px 0 #646464;"></div>
<span class="t" style="top:174.06px;font-size:11.5px;color:#fafafa;font-weight:bold;left:344.71px;">M</span>
<div style="left:363.2px;top:171.6px;width:10.8px;height:36.6px;background:#1c1c1c;"></div>
<div style="left:210px;top:191.39999999999998px;width:126px;height:17.0px;background:#1a1a1a;border-radius:3px;"></div>
<div style="left:212px;top:193.39999999999998px;width:74.2px;height:13.0px;background:#633b19;border-radius:1px;"></div>
<div style="left:284.75px;top:193.39999999999998px;width:1.45px;height:13.0px;background:#f5821f;"></div>
<div style="left:339px;top:191.2px;width:21px;height:17.0px;background:#707070;border-radius:3px;border:1px solid #333;"></div>
<div style="left:344.7px;top:195.04999999999998px;width:9.6px;height:2.1px;background:#fafafa;"></div>
<div style="left:344.7px;top:198.64999999999998px;width:9.6px;height:2.1px;background:#fafafa;"></div>
<div style="left:344.7px;top:202.24999999999997px;width:9.6px;height:2.1px;background:#fafafa;"></div>
<svg style="left:191px;top:192.7px;" width="14" height="14" viewBox="0 0 14 14"><path d="M1.3 1V12M3 2.6V10.4M4.7 4V9M6.4 4.8V8.2M8 5.4V7.6M9 6.5H12.6" stroke="#a0a0a0" stroke-width="1.1" fill="none"/></svg>
<div style="left:179px;top:509.4px;width:198.3px;height:43.0px;background:#4d4d4d;border-radius:3px 0 0 3px;"></div>
<div style="left:179px;top:509.4px;width:6.2px;height:43.0px;background:#8a8a8a;border-radius:3px 0 0 3px;"></div>
<span class="t" style="top:515.71px;font-size:11px;color:#f0f0f0;left:191.20px;transform:scaleX(0.995);transform-origin:0 50%;">S1 Effect</span>
<div style="left:291.6px;top:513.6px;width:19.6px;height:12.6px;background:#696969;border-radius:1px;"></div>
<svg style="left:296.5px;top:515.6px;" width="10" height="10" viewBox="0 0 10 10"><circle cx="5" cy="5" r="4.2" fill="#8c8c8c"/></svg>
<div style="left:315px;top:512.4px;width:21px;height:17.0px;background:#747474;border-radius:3px;border:1px solid #333;box-shadow:inset 0 -3px 0 #646464;"></div>
<span class="t" style="top:515.26px;font-size:11.5px;color:#fafafa;font-weight:bold;left:321.66px;">S</span>
<div style="left:339px;top:512.4px;width:21px;height:17.0px;background:#747474;border-radius:3px;border:1px solid #333;box-shadow:inset 0 -3px 0 #646464;"></div>
<span class="t" style="top:515.26px;font-size:11.5px;color:#fafafa;font-weight:bold;left:344.71px;">M</span>
<div style="left:363.2px;top:512.8px;width:10.8px;height:36.6px;background:#1c1c1c;"></div>
<div style="left:210px;top:532.6px;width:126px;height:17.0px;background:#1a1a1a;border-radius:3px;"></div>
<div style="left:212px;top:534.6px;width:97.6px;height:13.0px;background:#633b19;border-radius:1px;"></div>
<div style="left:308.15000000000003px;top:534.6px;width:1.45px;height:13.0px;background:#f5821f;"></div>
<div style="left:339px;top:532.4px;width:21px;height:17.0px;background:#707070;border-radius:3px;border:1px solid #333;"></div>
<div style="left:344.7px;top:536.25px;width:9.6px;height:2.1px;background:#fafafa;"></div>
<div style="left:344.7px;top:539.85px;width:9.6px;height:2.1px;background:#fafafa;"></div>
<div style="left:344.7px;top:543.45px;width:9.6px;height:2.1px;background:#fafafa;"></div>
<svg style="left:191px;top:533.9px;" width="14" height="14" viewBox="0 0 14 14"><path d="M1.4 3.4H8V10.4M4.8 7.4L8 10.8L11.2 7.4" fill="none" stroke="#9a9a9a" stroke-width="1.7"/></svg>
<div style="left:179px;top:554.2px;width:198.3px;height:43.0px;background:#4d4d4d;border-radius:3px 0 0 3px;"></div>
<div style="left:179px;top:554.2px;width:6.2px;height:43.0px;background:#8a8a8a;border-radius:3px 0 0 3px;"></div>
<span class="t" style="top:560.81px;font-size:11px;color:#f0f0f0;left:191.20px;transform:scaleX(1.017);transform-origin:0 50%;">Master</span>
<div style="left:291.6px;top:558.4000000000001px;width:19.6px;height:12.6px;background:#696969;border-radius:1px;"></div>
<svg style="left:296.5px;top:560.4000000000001px;" width="10" height="10" viewBox="0 0 10 10"><circle cx="5" cy="5" r="4.2" fill="#8c8c8c"/></svg>
<div style="left:315px;top:557.2px;width:21px;height:17.0px;background:#747474;border-radius:3px;border:1px solid #333;box-shadow:inset 0 -3px 0 #646464;"></div>
<span class="t" style="top:560.07px;font-size:11.5px;color:#fafafa;font-weight:bold;left:321.66px;">S</span>
<div style="left:339px;top:557.2px;width:21px;height:17.0px;background:#747474;border-radius:3px;border:1px solid #333;box-shadow:inset 0 -3px 0 #646464;"></div>
<span class="t" style="top:560.07px;font-size:11.5px;color:#fafafa;font-weight:bold;left:344.71px;">M</span>
<div style="left:363.2px;top:557.6px;width:10.8px;height:36.6px;background:#1c1c1c;"></div>
<div style="left:210px;top:577.4000000000001px;width:126px;height:17.0px;background:#1a1a1a;border-radius:3px;"></div>
<div style="left:212px;top:579.4000000000001px;width:97.6px;height:13.0px;background:#633b19;border-radius:1px;"></div>
<div style="left:308.15000000000003px;top:579.4000000000001px;width:1.45px;height:13.0px;background:#f5821f;"></div>
<div style="left:339px;top:577.2px;width:21px;height:17.0px;background:#707070;border-radius:3px;border:1px solid #333;"></div>
<div style="left:344.7px;top:581.0500000000001px;width:9.6px;height:2.1px;background:#fafafa;"></div>
<div style="left:344.7px;top:584.6500000000001px;width:9.6px;height:2.1px;background:#fafafa;"></div>
<div style="left:344.7px;top:588.2500000000001px;width:9.6px;height:2.1px;background:#fafafa;"></div>
<svg style="left:191px;top:578.7px;" width="14" height="14" viewBox="0 0 14 14"><path d="M1.4 9.4L0.8 4L4 6.4L6.5 1.6L9 6.4L12.2 4L11.6 9.4Z" fill="#a6a6a6"/><rect x="1.6" y="10.2" width="9.8" height="1.8" fill="#a6a6a6"/></svg>
<svg style="left:273.4px;top:218.6px;" width="10" height="10" viewBox="0 0 10 10"><path d="M5 0.4V9.6M0.4 5H9.6" stroke="#828282" stroke-width="3"/></svg>
<svg style="left:184.6px;top:606.6px;" width="8" height="9" viewBox="0 0 8 9"><g fill="#c4c4c4"><path d="M0.2 2.2L2.8 0.2V1.6H7.4V2.8H2.8V4.2Z"/><path d="M7.6 6.2L5 4.2V5.6H0.4V6.8H5V8.2Z"/></g></svg>
<div style="left:200px;top:602px;width:16.8px;height:16.7px;background:#2e2e2e;border-radius:2px;"></div>
<div style="left:220px;top:602px;width:16.8px;height:16.7px;background:#2e2e2e;border-radius:2px;"></div>
<div style="left:240.3px;top:602px;width:16.5px;height:16.7px;background:#2e2e2e;border-radius:2px;"></div>
<svg style="left:202.8px;top:606.6px;" width="12" height="9" viewBox="0 0 12 9"><g fill="#f5821f"><rect x="0" y="0.2" width="5" height="1.1"/><rect x="0" y="2.4" width="5" height="1.1"/><rect x="0" y="4.6" width="5" height="1.1"/><rect x="0" y="6.8" width="5" height="1.1"/><rect x="6.2" y="0.2" width="5.2" height="3.3"/><rect x="6.2" y="4.6" width="5.2" height="3.3"/></g></svg>
<svg style="left:222.5px;top:604.5px;" width="12" height="12" viewBox="0 0 12 12"><path d="M1 2.4H7.4V9.6M4 6.6L7.4 10.2L10.8 6.6" fill="none" stroke="#f5821f" stroke-width="1.9"/></svg>
<svg style="left:243px;top:605px;" width="11" height="11" viewBox="0 0 11 11"><path d="M1.6 1.6L9.2 9.2M9.2 1.6L1.6 9.2" stroke="#f5821f" stroke-width="2"/></svg>
<svg style="left:381px;top:606px;" width="8" height="9" viewBox="0 0 8 9"><path d="M7.4 0.6V8.2L0.8 4.4Z" fill="#9a9a9a"/></svg>
<div style="left:396.8px;top:606px;width:820.2px;height:9px;background:#767676;border-radius:3px;"></div>
<svg style="left:1337px;top:606px;" width="8" height="9" viewBox="0 0 8 9"><path d="M0.8 0.6V8.2L7.4 4.4Z" fill="#9a9a9a"/></svg>
<div style="left:1353px;top:602.3px;width:21px;height:16.5px;background:#2e2e2e;border-radius:2px;"></div>
<svg style="left:1356px;top:603.5px;" width="16" height="15" viewBox="0 0 16 15"><g fill="none" stroke="#f5821f" stroke-width="1.2"><circle cx="3.6" cy="5.6" r="1.6"/><circle cx="9.4" cy="2.4" r="1.6"/><path d="M5 4.8L8 3.2"/><rect x="1.4" y="9" width="7" height="3.8" rx="1.9"/><rect x="7.4" y="9" width="7" height="3.8" rx="1.9"/></g></svg>
<span class="t" style="top:605.61px;font-size:11px;color:#d8d8d8;left:1426.50px;transform:scaleX(1.098);transform-origin:0 50%;">1/16</span>
<svg style="left:1455px;top:608px;" width="7" height="5" viewBox="0 0 7 5"><path d="M0.4 4.2H6L3.2 0.6Z" fill="#d0d0d0"/></svg>
<div style="left:1469px;top:602.3px;width:16.8px;height:16.5px;background:#2e2e2e;border-radius:2px;"></div>
<svg style="left:1471.5px;top:604px;" width="12" height="13" viewBox="0 0 12 13"><path d="M2 3.4H9.8M7.2 0.8L10 3.4L7.2 6" fill="none" stroke="#f5821f" stroke-width="1.4"/><path d="M2.6 7V12M5.4 7V12" stroke="#8a4a12" stroke-width="1"/><path d="M8.4 6V12" stroke="#f5821f" stroke-width="1.4"/></svg>
<!-- browser -->
<div style="left:1494.8px;top:79px;width:222.4px;height:796px;background:#4d4d4d;border-radius:5px;"></div>
<span class="t" style="top:87.61px;font-size:11px;color:#f0f0f0;left:1505.50px;transform:scaleX(0.993);transform-origin:0 50%;">Browser - Devices</span>
<div style="left:1498px;top:103.2px;width:28px;height:20.6px;background:#2e2e2e;"></div>
<svg style="left:1504.6px;top:106.4px;" width="16" height="14" viewBox="0 0 16 14"><rect x="1.4" y="1.4" width="13.2" height="11.2" rx="2.6" fill="#3a3a3a" stroke="#f5821f" stroke-width="2"/></svg>
<svg style="left:1535.5px;top:105.4px;" width="16" height="16" viewBox="0 0 16 16"><circle cx="8" cy="8" r="7" fill="none" stroke="#e6e6e6" stroke-width="1.1"/><path d="M3.2 8L7 5.4V10.6ZM12.8 8L9 5.4V10.6Z" fill="#e6e6e6"/></svg>
<svg style="left:1567px;top:106px;" width="16" height="15" viewBox="0 0 16 15"><path d="M0.4 7.5H2.2M3.5 1V14M5.5 3.2V11.8M7.5 4.8V10.2M9.5 6V9M10.6 7.5H14.4" stroke="#e6e6e6" stroke-width="1.1" fill="none"/></svg>
<svg style="left:1598.5px;top:107px;" width="15" height="13" viewBox="0 0 15 13"><g fill="#e6e6e6"><rect x="0.6" y="0.6" width="2.6" height="11"/><rect x="4.3" y="0.6" width="2.7" height="11"/><rect x="8" y="0.6" width="2.7" height="11"/><rect x="11.6" y="0.6" width="1.6" height="11"/></g><g fill="#4d4d4d"><rect x="2.7" y="0.6" width="2" height="6.4"/><rect x="6.5" y="0.6" width="2" height="6.4"/><rect x="10.2" y="0.6" width="1.8" height="6.4"/></g></svg>
<svg style="left:1629.5px;top:106.4px;" width="14" height="14" viewBox="0 0 14 14"><circle cx="7" cy="7" r="6.5" fill="#e6e6e6"/><circle cx="7" cy="7" r="2.6" fill="#8a8a8a"/><circle cx="7" cy="7" r="1.1" fill="#e6e6e6"/><path d="M7 0.5A6.5 6.5 0 0 1 13.5 7L9.6 7A2.6 2.6 0 0 0 7 4.4Z" fill="#b8b8b8"/></svg>
<svg style="left:1660.5px;top:107.4px;" width="14" height="12" viewBox="0 0 14 12"><rect x="0.5" y="0.5" width="13" height="11" fill="#a8a8a8" stroke="#e6e6e6" stroke-width="1"/><rect x="0.5" y="0.5" width="13" height="3" fill="#e6e6e6"/><rect x="1" y="8" width="12" height="3" fill="#d0d0d0"/></svg>
<svg style="left:1692.5px;top:107px;" width="15" height="13" viewBox="0 0 15 13"><rect x="0.6" y="0.6" width="13.4" height="8.6" fill="#a0a0a0" stroke="#e6e6e6" stroke-width="1.2"/><rect x="5.6" y="9.6" width="3.4" height="1.6" fill="#e6e6e6"/><rect x="3.4" y="11" width="7.8" height="1.2" fill="#e6e6e6"/></svg>
<div style="left:1498px;top:127.4px;width:216px;height:20.3px;background:#1a1a1a;border-radius:4px;"></div>
<svg style="left:1504px;top:132.4px;" width="16" height="12" viewBox="0 0 16 12"><circle cx="4.6" cy="4.6" r="3.4" fill="none" stroke="#e6e6e6" stroke-width="1.4"/><path d="M7 7L10 10.4" stroke="#e6e6e6" stroke-width="1.8"/><path d="M10.4 6.4H14.4L12.4 8.8Z" fill="#e6e6e6"/></svg>
<svg style="left:1694.4px;top:133.7px;" width="8" height="8" viewBox="0 0 8 8"><path d="M0.8 0.8L7 7M7 0.8L0.8 7" stroke="#e6e6e6" stroke-width="1.3"/></svg>
<div style="left:1498.6px;top:151.4px;width:215.2px;height:19.8px;background:#4d4d4d;border:1px solid #3a3a3a;"></div>
<div style="left:1506px;top:158.65000000000003px;width:7.2px;height:0.9px;background:#e0e0e0;"></div>
<div style="left:1506px;top:160.85000000000002px;width:7.2px;height:0.9px;background:#e0e0e0;"></div>
<div style="left:1506px;top:163.05px;width:7.2px;height:0.9px;background:#e0e0e0;"></div>
<span class="t" style="top:156.51px;font-size:11px;color:#f0f0f0;left:1519.00px;transform:scaleX(1.008);transform-origin:0 50%;-webkit-text-stroke:0.3px #f0f0f0;">Collection</span>
<div style="left:1498.6px;top:171.6px;width:215.2px;height:19.7px;background:#4d4d4d;border:1px solid #3a3a3a;"></div>
<div style="left:1506px;top:178.8px;width:7.2px;height:0.9px;background:#e0e0e0;"></div>
<div style="left:1506px;top:181.0px;width:7.2px;height:0.9px;background:#e0e0e0;"></div>
<div style="left:1506px;top:183.2px;width:7.2px;height:0.9px;background:#e0e0e0;"></div>
<span class="t" style="top:176.66px;font-size:11px;color:#f0f0f0;left:1519.00px;-webkit-text-stroke:0.3px #f0f0f0;">Location</span>
<div style="left:1498.6px;top:192.6px;width:215.2px;height:224.0px;background:#0c0c0c;"></div>
<div style="left:1500px;top:194px;width:207.6px;height:20px;background:#2b3947;border-top:1px solid #435a6e;border-bottom:1px solid #3a4c5c;"></div>
<div style="left:1710.3px;top:192.6px;width:3.7px;height:33.2px;background:#3c3c3c;"></div>
<div style="left:1710.3px;top:192.6px;width:3.7px;height:4.8px;background:#4a4a4a;"></div>
<svg style="left:1505px;top:197.2px;" width="13" height="13" viewBox="0 0 13 13"><circle cx="6.6" cy="6.5" r="5.2" fill="none" stroke="#a0a0a0" stroke-width="1.5"/></svg>
<span class="t" style="top:198.71px;font-size:11px;color:#f4f4f4;left:1524.40px;transform:scaleX(0.985);transform-origin:0 50%;-webkit-text-stroke:0.3px #f0f0f0;">All Device Locations</span>
<span class="t" style="top:198.70px;font-size:10px;color:#8a8a8a;left:1690.24px;transform:scaleX(0.896);transform-origin:100% 50%;">99+</span>
<svg style="left:1519px;top:216.4px;" width="16" height="16" viewBox="0 0 16 16"><circle cx="8" cy="7.7" r="7.4" fill="#e81c3e"/><g fill="#f6a8b4"><rect x="4.4" y="5.6" width="1.4" height="1.4"/><rect x="6.2" y="5.6" width="1.4" height="1.4"/><rect x="8.4" y="5.6" width="1.4" height="1.4"/><rect x="10.2" y="5.6" width="1.4" height="1.4"/><rect x="3" y="7.4" width="1.4" height="1.4"/><rect x="4.8" y="7.4" width="1.4" height="1.4"/><rect x="6.6" y="7.4" width="1.4" height="1.4"/><rect x="8.2" y="7.4" width="1.4" height="1.4"/><rect x="9.8" y="7.4" width="1.4" height="1.4"/><rect x="11.6" y="7.4" width="1.4" height="1.4"/><rect x="2.4" y="9.2" width="1.2" height="1.4"/><rect x="4.6" y="9.2" width="1.4" height="1.4"/><rect x="10" y="9.2" width="1.4" height="1.4"/><rect x="12.4" y="9.2" width="1.2" height="1.4"/></g></svg>
<span class="t" style="top:219.81px;font-size:11px;color:#f4f4f4;left:1540.30px;transform:scaleX(1.039);transform-origin:0 50%;-webkit-text-stroke:0.3px #f0f0f0;">Bitwig</span>
<span class="t" style="top:219.50px;font-size:10px;color:#8a8a8a;left:1693.08px;transform:scaleX(0.881);transform-origin:100% 50%;">94</span>
<svg style="left:1504px;top:241.4px;" width="8" height="8" viewBox="0 0 8 8"><path d="M7.2 0.4V7H0.6Z" fill="#f4f4f4"/></svg>
<svg style="left:1519px;top:237px;" width="16" height="14" viewBox="0 0 16 14"><rect x="0" y="0" width="15.2" height="13" fill="#b4c28e"/><rect x="0" y="0" width="15.2" height="1.2" fill="#8a9a68"/><rect x="0" y="11.6" width="15.2" height="1.4" fill="#8a9a68"/><g fill="#9aae6e"><rect x="11" y="2.4" width="3.2" height="1.6"/><rect x="11" y="5.6" width="3.2" height="1.6"/><rect x="11" y="8.8" width="3.2" height="1.6"/></g><path d="M1.6 6.5H4.6" stroke="#a04a1a" stroke-width="1.2"/><path d="M4.4 4.4H7.2A2.1 2.1 0 0 1 7.2 8.6H4.4Z" fill="#a04a1a"/><path d="M8.6 5.4H10.6M8.6 7.6H10.6" stroke="#a04a1a" stroke-width="1"/></svg>
<span class="t" style="top:238.51px;font-size:11px;color:#f4f4f4;left:1539.20px;transform:scaleX(0.961);transform-origin:0 50%;-webkit-text-stroke:0.3px #f0f0f0;">VST64</span>
<span class="t" style="top:238.50px;font-size:10px;color:#8a8a8a;left:1690.24px;transform:scaleX(0.896);transform-origin:100% 50%;">99+</span>
<svg style="left:1526px;top:256.90000000000003px;" width="16" height="14" viewBox="0 0 16 14"><path d="M0 0.4H5.2L6.4 1.8H15.2V13H0Z" fill="#c4c4c4"/><path d="M0 2.6H15.2V3.4H0Z" fill="#9e9e9e"/><path d="M0 12.2H15.2V13H0Z" fill="#a8a8a8"/></svg>
<span class="t" style="top:258.71px;font-size:11px;color:#f4f4f4;left:1546.20px;transform:scaleX(1.009);transform-origin:0 50%;-webkit-text-stroke:0.3px #f0f0f0;">BiFilter2</span>
<span class="t" style="top:258.60px;font-size:10px;color:#8a8a8a;left:1696.24px;">1</span>
<svg style="left:1526px;top:276.85px;" width="16" height="14" viewBox="0 0 16 14"><path d="M0 0.4H5.2L6.4 1.8H15.2V13H0Z" fill="#c4c4c4"/><path d="M0 2.6H15.2V3.4H0Z" fill="#9e9e9e"/><path d="M0 12.2H15.2V13H0Z" fill="#a8a8a8"/></svg>
<span class="t" style="top:278.66px;font-size:11px;color:#f4f4f4;left:1546.20px;transform:scaleX(1.011);transform-origin:0 50%;-webkit-text-stroke:0.3px #f0f0f0;">Boost11</span>
<span class="t" style="top:278.55px;font-size:10px;color:#8a8a8a;left:1696.24px;">1</span>
<svg style="left:1526px;top:296.8px;" width="16" height="14" viewBox="0 0 16 14"><path d="M0 0.4H5.2L6.4 1.8H15.2V13H0Z" fill="#c4c4c4"/><path d="M0 2.6H15.2V3.4H0Z" fill="#9e9e9e"/><path d="M0 12.2H15.2V13H0Z" fill="#a8a8a8"/></svg>
<span class="t" style="top:298.61px;font-size:11px;color:#f4f4f4;left:1546.20px;transform:scaleX(0.930);transform-origin:0 50%;-webkit-text-stroke:0.3px #f0f0f0;">BREVERB SONAR</span>
<span class="t" style="top:298.50px;font-size:10px;color:#8a8a8a;left:1696.24px;">1</span>
<svg style="left:1526px;top:316.75000000000006px;" width="16" height="14" viewBox="0 0 16 14"><path d="M0 0.4H5.2L6.4 1.8H15.2V13H0Z" fill="#c4c4c4"/><path d="M0 2.6H15.2V3.4H0Z" fill="#9e9e9e"/><path d="M0 12.2H15.2V13H0Z" fill="#a8a8a8"/></svg>
<span class="t" style="top:318.56px;font-size:11px;color:#f4f4f4;left:1546.20px;transform:scaleX(0.985);transform-origin:0 50%;-webkit-text-stroke:0.3px #f0f0f0;">Channel Tools</span>
<span class="t" style="top:318.45px;font-size:10px;color:#8a8a8a;left:1696.24px;">1</span>
<svg style="left:1526px;top:336.70000000000005px;" width="16" height="14" viewBox="0 0 16 14"><path d="M0 0.4H5.2L6.4 1.8H15.2V13H0Z" fill="#c4c4c4"/><path d="M0 2.6H15.2V3.4H0Z" fill="#9e9e9e"/><path d="M0 12.2H15.2V13H0Z" fill="#a8a8a8"/></svg>
<span class="t" style="top:338.51px;font-size:11px;color:#f4f4f4;left:1546.20px;transform:scaleX(1.026);transform-origin:0 50%;-webkit-text-stroke:0.3px #f0f0f0;">D16</span>
<span class="t" style="top:338.40px;font-size:10px;color:#8a8a8a;left:1696.24px;">2</span>
<svg style="left:1526px;top:356.65000000000003px;" width="16" height="14" viewBox="0 0 16 14"><path d="M0 0.4H5.2L6.4 1.8H15.2V13H0Z" fill="#c4c4c4"/><path d="M0 2.6H15.2V3.4H0Z" fill="#9e9e9e"/><path d="M0 12.2H15.2V13H0Z" fill="#a8a8a8"/></svg>
<span class="t" style="top:358.46px;font-size:11px;color:#f4f4f4;left:1546.20px;-webkit-text-stroke:0.3px #f0f0f0;">DropZone</span>
<span class="t" style="top:358.35px;font-size:10px;color:#8a8a8a;left:1696.24px;">1</span>
<svg style="left:1526px;top:376.6px;" width="16" height="14" viewBox="0 0 16 14"><path d="M0 0.4H5.2L6.4 1.8H15.2V13H0Z" fill="#c4c4c4"/><path d="M0 2.6H15.2V3.4H0Z" fill="#9e9e9e"/><path d="M0 12.2H15.2V13H0Z" fill="#a8a8a8"/></svg>
<span class="t" style="top:378.41px;font-size:11px;color:#f4f4f4;left:1546.20px;transform:scaleX(0.966);transform-origin:0 50%;-webkit-text-stroke:0.3px #f0f0f0;">KORG</span>
<span class="t" style="top:378.30px;font-size:10px;color:#8a8a8a;left:1693.28px;">10</span>
<svg style="left:1526px;top:396.55px;" width="16" height="14" viewBox="0 0 16 14"><path d="M0 0.4H5.2L6.4 1.8H15.2V13H0Z" fill="#c4c4c4"/><path d="M0 2.6H15.2V3.4H0Z" fill="#9e9e9e"/><path d="M0 12.2H15.2V13H0Z" fill="#a8a8a8"/></svg>
<span class="t" style="top:398.36px;font-size:11px;color:#f4f4f4;left:1546.20px;transform:scaleX(0.947);transform-origin:0 50%;-webkit-text-stroke:0.3px #f0f0f0;">Lounge Lizard Session</span>
<span class="t" style="top:398.25px;font-size:10px;color:#8a8a8a;left:1696.24px;">1</span>
<div style="left:1498.6px;top:418.7px;width:215.2px;height:18.0px;background:#4d4d4d;border:1px solid #3a3a3a;"></div>
<div style="left:1506px;top:425.05px;width:7.2px;height:0.9px;background:#e0e0e0;"></div>
<div style="left:1506px;top:427.25px;width:7.2px;height:0.9px;background:#e0e0e0;"></div>
<div style="left:1506px;top:429.45px;width:7.2px;height:0.9px;background:#e0e0e0;"></div>
<span class="t" style="top:422.91px;font-size:11px;color:#f0f0f0;left:1519.00px;transform:scaleX(0.988);transform-origin:0 50%;-webkit-text-stroke:0.3px #f0f0f0;">Category</span>
<div style="left:1498.6px;top:440.6px;width:215.2px;height:387.4px;background:#0c0c0c;"></div>
<div style="left:1710.6px;top:440.6px;width:3.4px;height:387.4px;background:#0c0c0c;"></div>
<div style="left:1711.4px;top:441.4px;width:2.6px;height:15.6px;background:#404040;"></div>
<svg style="left:1503px;top:445px;" width="18" height="18" viewBox="0 0 18 18"><rect x="1.5" y="0.5" width="14" height="14" rx="2" fill="none" stroke="#e8622c" stroke-width="1.25"/><path d="M3.8 2.6V12.4M3.8 4L5.2 11L6.2 4.6L7.3 10.2L8.2 5.6L9.1 9.2L9.9 6.6L10.6 7.5H13.6" stroke="#e8622c" stroke-width="0.9" fill="none" stroke-linejoin="round"/><rect x="10.6" y="10.4" width="7" height="6" fill="#0c0c0c"/><path d="M11.4 15.8L12.5 11M13.5 15.8L14.6 11M15.6 15.8L16.7 11" stroke="#c0c8d0" stroke-width="0.95"/></svg>
<svg style="left:1687.6px;top:446.59999999999997px;" width="12" height="12" viewBox="0 0 12 12"><path d="M6 0.6L7.5 4.4L11.6 4.7L8.4 7.3L9.5 11.3L6 9L2.5 11.3L3.6 7.3L0.4 4.7L4.5 4.4Z" fill="#6e5a30"/></svg>
<span class="t" style="top:447.81px;font-size:11px;color:#f4f4f4;left:1524.00px;transform:scaleX(0.985);transform-origin:0 50%;-webkit-text-stroke:0.3px #f0f0f0;">2016 Stereo Room</span>
<svg style="left:1503px;top:465px;" width="18" height="18" viewBox="0 0 18 18"><rect x="1.5" y="0.5" width="14" height="14" rx="2" fill="none" stroke="#f2c41c" stroke-width="1.3"/><rect x="3.5" y="2.5" width="10" height="10" fill="#f2c41c"/><rect x="3.5" y="5" width="5.5" height="2" fill="#0c0c0c"/><rect x="3.5" y="8.5" width="5.5" height="2" fill="#0c0c0c"/><path d="M9 6H13.5M9 9.5H13.5" stroke="#0c0c0c" stroke-width="0.5"/><rect x="10.6" y="10.4" width="7" height="6" fill="#0c0c0c"/><path d="M11.4 15.8L12.5 11M13.5 15.8L14.6 11M15.6 15.8L16.7 11" stroke="#c0c8d0" stroke-width="0.95"/></svg>
<svg style="left:1687.6px;top:466.59999999999997px;" width="12" height="12" viewBox="0 0 12 12"><path d="M6 0.6L7.5 4.4L11.6 4.7L8.4 7.3L9.5 11.3L6 9L2.5 11.3L3.6 7.3L0.4 4.7L4.5 4.4Z" fill="#6e5a30"/></svg>
<span class="t" style="top:467.81px;font-size:11px;color:#f4f4f4;left:1524.00px;transform:scaleX(0.949);transform-origin:0 50%;-webkit-text-stroke:0.3px #f0f0f0;">AAS Player</span>
<svg style="left:1503px;top:485px;" width="18" height="18" viewBox="0 0 18 18"><rect x="1.5" y="0.5" width="14" height="14" rx="2" fill="none" stroke="#f2c41c" stroke-width="1.3"/><rect x="3.5" y="2.5" width="10" height="10" fill="#f2c41c"/><rect x="3.5" y="5" width="5.5" height="2" fill="#0c0c0c"/><rect x="3.5" y="8.5" width="5.5" height="2" fill="#0c0c0c"/><path d="M9 6H13.5M9 9.5H13.5" stroke="#0c0c0c" stroke-width="0.5"/><rect x="10.6" y="10.4" width="7" height="6" fill="#0c0c0c"/><path d="M11.4 15.8L12.5 11M13.5 15.8L14.6 11M15.6 15.8L16.7 11" stroke="#c0c8d0" stroke-width="0.95"/></svg>
<svg style="left:1687.6px;top:486.59999999999997px;" width="12" height="12" viewBox="0 0 12 12"><path d="M6 0.6L7.5 4.4L11.6 4.7L8.4 7.3L9.5 11.3L6 9L2.5 11.3L3.6 7.3L0.4 4.7L4.5 4.4Z" fill="#6e5a30"/></svg>
<span class="t" style="top:487.81px;font-size:11px;color:#f4f4f4;left:1524.00px;transform:scaleX(0.915);transform-origin:0 50%;-webkit-text-stroke:0.3px #f0f0f0;">ACE</span>
<svg style="left:1503px;top:505px;" width="18" height="18" viewBox="0 0 18 18"><rect x="1.5" y="0.5" width="14" height="14" rx="2" fill="none" stroke="#e8622c" stroke-width="1.25"/><path d="M3.8 2.6V12.4M3.8 4L5.2 11L6.2 4.6L7.3 10.2L8.2 5.6L9.1 9.2L9.9 6.6L10.6 7.5H13.6" stroke="#e8622c" stroke-width="0.9" fill="none" stroke-linejoin="round"/><rect x="9" y="10" width="9" height="6" fill="#0c0c0c"/><path d="M9.4 13H11.6" stroke="#f08a1c" stroke-width="1.2"/><path d="M11.4 10.6H13.4A2.4 2.4 0 0 1 13.4 15.4H11.4Z" fill="#f08a1c"/><path d="M15 12H17.2M15 14H17.2" stroke="#f08a1c" stroke-width="1"/></svg>
<svg style="left:1687.6px;top:506.6px;" width="12" height="12" viewBox="0 0 12 12"><path d="M6 0.6L7.5 4.4L11.6 4.7L8.4 7.3L9.5 11.3L6 9L2.5 11.3L3.6 7.3L0.4 4.7L4.5 4.4Z" fill="#6e5a30"/></svg>
<span class="t" style="top:507.81px;font-size:11px;color:#f4f4f4;left:1524.00px;transform:scaleX(0.980);transform-origin:0 50%;-webkit-text-stroke:0.3px #f0f0f0;">Acoustica 31 Band EQ</span>
<svg style="left:1503px;top:525px;" width="18" height="18" viewBox="0 0 18 18"><rect x="1.5" y="0.5" width="14" height="14" rx="2" fill="none" stroke="#f2c41c" stroke-width="1.3"/><rect x="3.5" y="2.5" width="10" height="10" fill="#f2c41c"/><rect x="3.5" y="5" width="5.5" height="2" fill="#0c0c0c"/><rect x="3.5" y="8.5" width="5.5" height="2" fill="#0c0c0c"/><path d="M9 6H13.5M9 9.5H13.5" stroke="#0c0c0c" stroke-width="0.5"/><rect x="9" y="10" width="9" height="6" fill="#0c0c0c"/><path d="M9.4 13H11.6" stroke="#f08a1c" stroke-width="1.2"/><path d="M11.4 10.6H13.4A2.4 2.4 0 0 1 13.4 15.4H11.4Z" fill="#f08a1c"/><path d="M15 12H17.2M15 14H17.2" stroke="#f08a1c" stroke-width="1"/></svg>
<svg style="left:1687.6px;top:526.6px;" width="12" height="12" viewBox="0 0 12 12"><path d="M6 0.6L7.5 4.4L11.6 4.7L8.4 7.3L9.5 11.3L6 9L2.5 11.3L3.6 7.3L0.4 4.7L4.5 4.4Z" fill="#6e5a30"/></svg>
<span class="t" style="top:527.81px;font-size:11px;color:#f4f4f4;left:1524.00px;transform:scaleX(0.971);transform-origin:0 50%;-webkit-text-stroke:0.3px #f0f0f0;">Acoustica Expanded Instrum...</span>
<svg style="left:1503px;top:545px;" width="18" height="18" viewBox="0 0 18 18"><rect x="1.5" y="0.5" width="14" height="14" rx="2" fill="none" stroke="#f2c41c" stroke-width="1.3"/><rect x="3.5" y="2.5" width="10" height="10" fill="#f2c41c"/><rect x="3.5" y="5" width="5.5" height="2" fill="#0c0c0c"/><rect x="3.5" y="8.5" width="5.5" height="2" fill="#0c0c0c"/><path d="M9 6H13.5M9 9.5H13.5" stroke="#0c0c0c" stroke-width="0.5"/><rect x="9" y="10" width="9" height="6" fill="#0c0c0c"/><path d="M9.4 13H11.6" stroke="#f08a1c" stroke-width="1.2"/><path d="M11.4 10.6H13.4A2.4 2.4 0 0 1 13.4 15.4H11.4Z" fill="#f08a1c"/><path d="M15 12H17.2M15 14H17.2" stroke="#f08a1c" stroke-width="1"/></svg>
<svg style="left:1687.6px;top:546.6px;" width="12" height="12" viewBox="0 0 12 12"><path d="M6 0.6L7.5 4.4L11.6 4.7L8.4 7.3L9.5 11.3L6 9L2.5 11.3L3.6 7.3L0.4 4.7L4.5 4.4Z" fill="#6e5a30"/></svg>
<span class="t" style="top:547.81px;font-size:11px;color:#f4f4f4;left:1524.00px;transform:scaleX(0.993);transform-origin:0 50%;-webkit-text-stroke:0.3px #f0f0f0;">Acoustica Instruments</span>
<svg style="left:1503px;top:565px;" width="18" height="18" viewBox="0 0 18 18"><rect x="1.5" y="0.5" width="14" height="14" rx="2" fill="none" stroke="#e8622c" stroke-width="1.25"/><path d="M3.8 2.6V12.4M3.8 4L5.2 11L6.2 4.6L7.3 10.2L8.2 5.6L9.1 9.2L9.9 6.6L10.6 7.5H13.6" stroke="#e8622c" stroke-width="0.9" fill="none" stroke-linejoin="round"/><rect x="9" y="10" width="9" height="6" fill="#0c0c0c"/><path d="M9.4 13H11.6" stroke="#f08a1c" stroke-width="1.2"/><path d="M11.4 10.6H13.4A2.4 2.4 0 0 1 13.4 15.4H11.4Z" fill="#f08a1c"/><path d="M15 12H17.2M15 14H17.2" stroke="#f08a1c" stroke-width="1"/></svg>
<svg style="left:1687.6px;top:566.6px;" width="12" height="12" viewBox="0 0 12 12"><path d="M6 0.6L7.5 4.4L11.6 4.7L8.4 7.3L9.5 11.3L6 9L2.5 11.3L3.6 7.3L0.4 4.7L4.5 4.4Z" fill="#6e5a30"/></svg>
<span class="t" style="top:567.81px;font-size:11px;color:#f4f4f4;left:1524.00px;transform:scaleX(0.980);transform-origin:0 50%;-webkit-text-stroke:0.3px #f0f0f0;">Acoustica Pro Studio Reverb</span>
<svg style="left:1503px;top:585px;" width="18" height="18" viewBox="0 0 18 18"><rect x="1.5" y="0.5" width="14" height="14" rx="2" fill="none" stroke="#f2c41c" stroke-width="1.3"/><rect x="3.5" y="2.5" width="10" height="10" fill="#f2c41c"/><rect x="3.5" y="5" width="5.5" height="2" fill="#0c0c0c"/><rect x="3.5" y="8.5" width="5.5" height="2" fill="#0c0c0c"/><path d="M9 6H13.5M9 9.5H13.5" stroke="#0c0c0c" stroke-width="0.5"/><rect x="9" y="10" width="9" height="6" fill="#0c0c0c"/><path d="M9.4 13H11.6" stroke="#f08a1c" stroke-width="1.2"/><path d="M11.4 10.6H13.4A2.4 2.4 0 0 1 13.4 15.4H11.4Z" fill="#f08a1c"/><path d="M15 12H17.2M15 14H17.2" stroke="#f08a1c" stroke-width="1"/></svg>
<svg style="left:1687.6px;top:586.6px;" width="12" height="12" viewBox="0 0 12 12"><path d="M6 0.6L7.5 4.4L11.6 4.7L8.4 7.3L9.5 11.3L6 9L2.5 11.3L3.6 7.3L0.4 4.7L4.5 4.4Z" fill="#6e5a30"/></svg>
<span class="t" style="top:587.81px;font-size:11px;color:#f4f4f4;left:1524.00px;transform:scaleX(0.987);transform-origin:0 50%;-webkit-text-stroke:0.3px #f0f0f0;">Acoustica Studio Drums</span>
<svg style="left:1503px;top:605px;" width="18" height="18" viewBox="0 0 18 18"><rect x="1.5" y="0.5" width="14" height="14" rx="2" fill="none" stroke="#e8622c" stroke-width="1.25"/><path d="M3.8 2.6V12.4M3.8 4L5.2 11L6.2 4.6L7.3 10.2L8.2 5.6L9.1 9.2L9.9 6.6L10.6 7.5H13.6" stroke="#e8622c" stroke-width="0.9" fill="none" stroke-linejoin="round"/><rect x="9" y="10" width="9" height="6" fill="#0c0c0c"/><path d="M9.4 13H11.6" stroke="#f08a1c" stroke-width="1.2"/><path d="M11.4 10.6H13.4A2.4 2.4 0 0 1 13.4 15.4H11.4Z" fill="#f08a1c"/><path d="M15 12H17.2M15 14H17.2" stroke="#f08a1c" stroke-width="1"/></svg>
<svg style="left:1687.6px;top:606.6px;" width="12" height="12" viewBox="0 0 12 12"><path d="M6 0.6L7.5 4.4L11.6 4.7L8.4 7.3L9.5 11.3L6 9L2.5 11.3L3.6 7.3L0.4 4.7L4.5 4.4Z" fill="#6e5a30"/></svg>
<span class="t" style="top:607.81px;font-size:11px;color:#f4f4f4;left:1524.00px;-webkit-text-stroke:0.3px #f0f0f0;">Acoustica Vocoder</span>
<svg style="left:1503px;top:625px;" width="18" height="18" viewBox="0 0 18 18"><rect x="1.5" y="0.5" width="14" height="14" rx="2" fill="none" stroke="#e8622c" stroke-width="1.25"/><path d="M3.8 2.6V12.4M3.8 4L5.2 11L6.2 4.6L7.3 10.2L8.2 5.6L9.1 9.2L9.9 6.6L10.6 7.5H13.6" stroke="#e8622c" stroke-width="0.9" fill="none" stroke-linejoin="round"/><rect x="10.6" y="10.4" width="7" height="6" fill="#0c0c0c"/><path d="M11.4 15.8L12.5 11M13.5 15.8L14.6 11M15.6 15.8L16.7 11" stroke="#c0c8d0" stroke-width="0.95"/></svg>
<svg style="left:1687.6px;top:626.6px;" width="12" height="12" viewBox="0 0 12 12"><path d="M6 0.6L7.5 4.4L11.6 4.7L8.4 7.3L9.5 11.3L6 9L2.5 11.3L3.6 7.3L0.4 4.7L4.5 4.4Z" fill="#6e5a30"/></svg>
<span class="t" style="top:627.81px;font-size:11px;color:#f4f4f4;left:1524.00px;transform:scaleX(1.008);transform-origin:0 50%;-webkit-text-stroke:0.3px #f0f0f0;">Adaptive Limiter</span>
<svg style="left:1503px;top:645px;" width="18" height="18" viewBox="0 0 18 18"><rect x="1.5" y="0.5" width="14" height="14" rx="2" fill="none" stroke="#f2c41c" stroke-width="1.3"/><rect x="3.5" y="2.5" width="10" height="10" fill="#f2c41c"/><rect x="3.5" y="5" width="5.5" height="2" fill="#0c0c0c"/><rect x="3.5" y="8.5" width="5.5" height="2" fill="#0c0c0c"/><path d="M9 6H13.5M9 9.5H13.5" stroke="#0c0c0c" stroke-width="0.5"/><rect x="9" y="10" width="9" height="6" fill="#0c0c0c"/><path d="M9.4 13H11.6" stroke="#f08a1c" stroke-width="1.2"/><path d="M11.4 10.6H13.4A2.4 2.4 0 0 1 13.4 15.4H11.4Z" fill="#f08a1c"/><path d="M15 12H17.2M15 14H17.2" stroke="#f08a1c" stroke-width="1"/></svg>
<svg style="left:1687.6px;top:646.6px;" width="12" height="12" viewBox="0 0 12 12"><path d="M6 0.6L7.5 4.4L11.6 4.7L8.4 7.3L9.5 11.3L6 9L2.5 11.3L3.6 7.3L0.4 4.7L4.5 4.4Z" fill="#6e5a30"/></svg>
<span class="t" style="top:647.81px;font-size:11px;color:#f4f4f4;left:1524.00px;-webkit-text-stroke:0.3px #f0f0f0;">Addictive Drums 2</span>
<svg style="left:1503px;top:665px;" width="18" height="18" viewBox="0 0 18 18"><rect x="1.5" y="0.5" width="14" height="14" rx="2" fill="none" stroke="#f2c41c" stroke-width="1.3"/><rect x="3.5" y="2.5" width="10" height="10" fill="#f2c41c"/><rect x="3.5" y="5" width="5.5" height="2" fill="#0c0c0c"/><rect x="3.5" y="8.5" width="5.5" height="2" fill="#0c0c0c"/><path d="M9 6H13.5M9 9.5H13.5" stroke="#0c0c0c" stroke-width="0.5"/><rect x="9" y="10" width="9" height="6" fill="#0c0c0c"/><path d="M9.4 13H11.6" stroke="#f08a1c" stroke-width="1.2"/><path d="M11.4 10.6H13.4A2.4 2.4 0 0 1 13.4 15.4H11.4Z" fill="#f08a1c"/><path d="M15 12H17.2M15 14H17.2" stroke="#f08a1c" stroke-width="1"/></svg>
<svg style="left:1687.6px;top:666.6px;" width="12" height="12" viewBox="0 0 12 12"><path d="M6 0.6L7.5 4.4L11.6 4.7L8.4 7.3L9.5 11.3L6 9L2.5 11.3L3.6 7.3L0.4 4.7L4.5 4.4Z" fill="#6e5a30"/></svg>
<span class="t" style="top:667.81px;font-size:11px;color:#f4f4f4;left:1524.00px;-webkit-text-stroke:0.3px #f0f0f0;">Addictive Keys</span>
<svg style="left:1503px;top:685px;" width="18" height="18" viewBox="0 0 18 18"><rect x="1.5" y="0.5" width="14" height="14" rx="2" fill="none" stroke="#e8622c" stroke-width="1.25"/><path d="M3.8 2.6V12.4M3.8 4L5.2 11L6.2 4.6L7.3 10.2L8.2 5.6L9.1 9.2L9.9 6.6L10.6 7.5H13.6" stroke="#e8622c" stroke-width="0.9" fill="none" stroke-linejoin="round"/><rect x="9" y="10" width="9" height="6" fill="#0c0c0c"/><path d="M9.4 13H11.6" stroke="#f08a1c" stroke-width="1.2"/><path d="M11.4 10.6H13.4A2.4 2.4 0 0 1 13.4 15.4H11.4Z" fill="#f08a1c"/><path d="M15 12H17.2M15 14H17.2" stroke="#f08a1c" stroke-width="1"/></svg>
<svg style="left:1687.6px;top:686.6px;" width="12" height="12" viewBox="0 0 12 12"><path d="M6 0.6L7.5 4.4L11.6 4.7L8.4 7.3L9.5 11.3L6 9L2.5 11.3L3.6 7.3L0.4 4.7L4.5 4.4Z" fill="#6e5a30"/></svg>
<span class="t" style="top:687.81px;font-size:11px;color:#f4f4f4;left:1524.00px;transform:scaleX(0.963);transform-origin:0 50%;-webkit-text-stroke:0.3px #f0f0f0;">AIRChorus_x64</span>
<svg style="left:1503px;top:705px;" width="18" height="18" viewBox="0 0 18 18"><rect x="1.5" y="0.5" width="14" height="14" rx="2" fill="none" stroke="#e8622c" stroke-width="1.25"/><path d="M3.8 2.6V12.4M3.8 4L5.2 11L6.2 4.6L7.3 10.2L8.2 5.6L9.1 9.2L9.9 6.6L10.6 7.5H13.6" stroke="#e8622c" stroke-width="0.9" fill="none" stroke-linejoin="round"/><rect x="9" y="10" width="9" height="6" fill="#0c0c0c"/><path d="M9.4 13H11.6" stroke="#f08a1c" stroke-width="1.2"/><path d="M11.4 10.6H13.4A2.4 2.4 0 0 1 13.4 15.4H11.4Z" fill="#f08a1c"/><path d="M15 12H17.2M15 14H17.2" stroke="#f08a1c" stroke-width="1"/></svg>
<svg style="left:1687.6px;top:706.6px;" width="12" height="12" viewBox="0 0 12 12"><path d="M6 0.6L7.5 4.4L11.6 4.7L8.4 7.3L9.5 11.3L6 9L2.5 11.3L3.6 7.3L0.4 4.7L4.5 4.4Z" fill="#6e5a30"/></svg>
<span class="t" style="top:707.81px;font-size:11px;color:#f4f4f4;left:1524.00px;transform:scaleX(0.965);transform-origin:0 50%;-webkit-text-stroke:0.3px #f0f0f0;">AIRCompressor_x64</span>
<svg style="left:1503px;top:725px;" width="18" height="18" viewBox="0 0 18 18"><rect x="1.5" y="0.5" width="14" height="14" rx="2" fill="none" stroke="#e8622c" stroke-width="1.25"/><path d="M3.8 2.6V12.4M3.8 4L5.2 11L6.2 4.6L7.3 10.2L8.2 5.6L9.1 9.2L9.9 6.6L10.6 7.5H13.6" stroke="#e8622c" stroke-width="0.9" fill="none" stroke-linejoin="round"/><rect x="9" y="10" width="9" height="6" fill="#0c0c0c"/><path d="M9.4 13H11.6" stroke="#f08a1c" stroke-width="1.2"/><path d="M11.4 10.6H13.4A2.4 2.4 0 0 1 13.4 15.4H11.4Z" fill="#f08a1c"/><path d="M15 12H17.2M15 14H17.2" stroke="#f08a1c" stroke-width="1"/></svg>
<svg style="left:1687.6px;top:726.6px;" width="12" height="12" viewBox="0 0 12 12"><path d="M6 0.6L7.5 4.4L11.6 4.7L8.4 7.3L9.5 11.3L6 9L2.5 11.3L3.6 7.3L0.4 4.7L4.5 4.4Z" fill="#6e5a30"/></svg>
<span class="t" style="top:727.81px;font-size:11px;color:#f4f4f4;left:1524.00px;-webkit-text-stroke:0.3px #f0f0f0;">AIRDiffuserDelay_x64</span>
<svg style="left:1503px;top:745px;" width="18" height="18" viewBox="0 0 18 18"><rect x="1.5" y="0.5" width="14" height="14" rx="2" fill="none" stroke="#e8622c" stroke-width="1.25"/><path d="M3.8 2.6V12.4M3.8 4L5.2 11L6.2 4.6L7.3 10.2L8.2 5.6L9.1 9.2L9.9 6.6L10.6 7.5H13.6" stroke="#e8622c" stroke-width="0.9" fill="none" stroke-linejoin="round"/><rect x="9" y="10" width="9" height="6" fill="#0c0c0c"/><path d="M9.4 13H11.6" stroke="#f08a1c" stroke-width="1.2"/><path d="M11.4 10.6H13.4A2.4 2.4 0 0 1 13.4 15.4H11.4Z" fill="#f08a1c"/><path d="M15 12H17.2M15 14H17.2" stroke="#f08a1c" stroke-width="1"/></svg>
<svg style="left:1687.6px;top:746.6px;" width="12" height="12" viewBox="0 0 12 12"><path d="M6 0.6L7.5 4.4L11.6 4.7L8.4 7.3L9.5 11.3L6 9L2.5 11.3L3.6 7.3L0.4 4.7L4.5 4.4Z" fill="#6e5a30"/></svg>
<span class="t" style="top:747.81px;font-size:11px;color:#f4f4f4;left:1524.00px;-webkit-text-stroke:0.3px #f0f0f0;">AIRDistortion_x64</span>
<svg style="left:1503px;top:765px;" width="18" height="18" viewBox="0 0 18 18"><rect x="1.5" y="0.5" width="14" height="14" rx="2" fill="none" stroke="#e8622c" stroke-width="1.25"/><path d="M3.8 2.6V12.4M3.8 4L5.2 11L6.2 4.6L7.3 10.2L8.2 5.6L9.1 9.2L9.9 6.6L10.6 7.5H13.6" stroke="#e8622c" stroke-width="0.9" fill="none" stroke-linejoin="round"/><rect x="9" y="10" width="9" height="6" fill="#0c0c0c"/><path d="M9.4 13H11.6" stroke="#f08a1c" stroke-width="1.2"/><path d="M11.4 10.6H13.4A2.4 2.4 0 0 1 13.4 15.4H11.4Z" fill="#f08a1c"/><path d="M15 12H17.2M15 14H17.2" stroke="#f08a1c" stroke-width="1"/></svg>
<svg style="left:1687.6px;top:766.6px;" width="12" height="12" viewBox="0 0 12 12"><path d="M6 0.6L7.5 4.4L11.6 4.7L8.4 7.3L9.5 11.3L6 9L2.5 11.3L3.6 7.3L0.4 4.7L4.5 4.4Z" fill="#6e5a30"/></svg>
<span class="t" style="top:767.81px;font-size:11px;color:#f4f4f4;left:1524.00px;transform:scaleX(0.977);transform-origin:0 50%;-webkit-text-stroke:0.3px #f0f0f0;">AIRDynamicDelay_x64</span>
<svg style="left:1503px;top:785px;" width="18" height="18" viewBox="0 0 18 18"><rect x="1.5" y="0.5" width="14" height="14" rx="2" fill="none" stroke="#e8622c" stroke-width="1.25"/><path d="M3.8 2.6V12.4M3.8 4L5.2 11L6.2 4.6L7.3 10.2L8.2 5.6L9.1 9.2L9.9 6.6L10.6 7.5H13.6" stroke="#e8622c" stroke-width="0.9" fill="none" stroke-linejoin="round"/><rect x="9" y="10" width="9" height="6" fill="#0c0c0c"/><path d="M9.4 13H11.6" stroke="#f08a1c" stroke-width="1.2"/><path d="M11.4 10.6H13.4A2.4 2.4 0 0 1 13.4 15.4H11.4Z" fill="#f08a1c"/><path d="M15 12H17.2M15 14H17.2" stroke="#f08a1c" stroke-width="1"/></svg>
<svg style="left:1687.6px;top:786.6px;" width="12" height="12" viewBox="0 0 12 12"><path d="M6 0.6L7.5 4.4L11.6 4.7L8.4 7.3L9.5 11.3L6 9L2.5 11.3L3.6 7.3L0.4 4.7L4.5 4.4Z" fill="#6e5a30"/></svg>
<span class="t" style="top:787.81px;font-size:11px;color:#f4f4f4;left:1524.00px;transform:scaleX(0.959);transform-origin:0 50%;-webkit-text-stroke:0.3px #f0f0f0;">AIREnhancer_x64</span>
<svg style="left:1503px;top:805px;" width="18" height="18" viewBox="0 0 18 18"><rect x="1.5" y="0.5" width="14" height="14" rx="2" fill="none" stroke="#e8622c" stroke-width="1.25"/><path d="M3.8 2.6V12.4M3.8 4L5.2 11L6.2 4.6L7.3 10.2L8.2 5.6L9.1 9.2L9.9 6.6L10.6 7.5H13.6" stroke="#e8622c" stroke-width="0.9" fill="none" stroke-linejoin="round"/><rect x="9" y="10" width="9" height="6" fill="#0c0c0c"/><path d="M9.4 13H11.6" stroke="#f08a1c" stroke-width="1.2"/><path d="M11.4 10.6H13.4A2.4 2.4 0 0 1 13.4 15.4H11.4Z" fill="#f08a1c"/><path d="M15 12H17.2M15 14H17.2" stroke="#f08a1c" stroke-width="1"/></svg>
<svg style="left:1687.6px;top:806.6px;" width="12" height="12" viewBox="0 0 12 12"><path d="M6 0.6L7.5 4.4L11.6 4.7L8.4 7.3L9.5 11.3L6 9L2.5 11.3L3.6 7.3L0.4 4.7L4.5 4.4Z" fill="#6e5a30"/></svg>
<span class="t" style="top:807.81px;font-size:11px;color:#f4f4f4;left:1524.00px;transform:scaleX(0.954);transform-origin:0 50%;-webkit-text-stroke:0.3px #f0f0f0;">AIREnsemble_x64</span>
<div style="left:1505px;top:826.2px;width:13px;height:1.4px;background:#e8622c;"></div>
<div style="left:1498.6px;top:828px;width:215.2px;height:3.8px;background:#242424;"></div>
<div style="left:1498.6px;top:831.8px;width:215.2px;height:16.6px;background:#1b1b1b;"></div>
<span class="t" style="top:834.01px;font-size:11px;color:#7c7c7c;left:1533.95px;">Show 276 redundant plug-ins</span>
<div style="left:1498.6px;top:852.2px;width:215.2px;height:19.4px;background:#1c1c1c;border-radius:4px;"></div>
<span class="t" style="top:857.61px;font-size:11px;color:#f0f0f0;left:1505.00px;transform:scaleX(0.979);transform-origin:0 50%;">Select a file to see its metadata here</span>
<!-- device -->
<div style="left:174.4px;top:627.6px;width:1317.6px;height:247.4px;background:#4d4d4d;border-radius:4px;"></div>
<div style="left:177.4px;top:631px;width:1312.0px;height:240.4px;background:#0b0b0b;border-radius:2px;"></div>
<div style="left:177.4px;top:631px;width:4.8px;height:240.4px;background:#ff5a00;border-radius:2px 0 0 2px;"></div>
<span class="t" style="left:167.30px;top:745.72px;font-size:12px;color:#f4f4f4;transform:rotate(-90deg) scaleX(0.895);transform-origin:50% 49%;">POLYMER</span>
<svg style="left:213.3px;top:745.4px;" width="12" height="12" viewBox="0 0 12 12"><path d="M6 1.5V10.5M1.5 6H10.5" stroke="#828282" stroke-width="3"/></svg>
<svg style="left:1032.5px;top:745.5px;" width="12" height="12" viewBox="0 0 12 12"><path d="M6 1.5V10.5M1.5 6H10.5" stroke="#828282" stroke-width="3"/></svg>
<div style="left:230px;top:642px;width:798.4px;height:219px;background:#4d4d4d;border-radius:5px;"></div>
<div style="left:230px;top:642px;width:27px;height:219px;background:#2f2f2f;border-radius:5px 0 0 5px;"></div>
<span class="t" style="left:218.32px;top:746.25px;font-size:10.5px;color:#f4f4f4;transform:rotate(-90deg) scaleX(0.945);transform-origin:50% 49%;">POLYMER</span>
<svg style="left:237px;top:649px;" width="13" height="13" viewBox="0 0 13 13"><path d="M3.9 3A4.6 4.6 0 1 0 9.1 3" fill="none" stroke="#f5821f" stroke-width="1.7"/><path d="M6.5 0.8V6" stroke="#f5821f" stroke-width="1.7"/></svg>
<svg style="left:238px;top:671.6px;" width="12" height="10" viewBox="0 0 12 10"><path d="M0 0.2H3.8L4.8 1.6H11V9.2H0Z" fill="#8c8c8c"/></svg>
<svg style="left:237px;top:809.8px;" width="14" height="11" viewBox="0 0 14 11"><rect x="0.7" y="0.9" width="11.8" height="9.2" rx="1.6" fill="none" stroke="#b0b0b0" stroke-width="1.3"/><rect x="0.7" y="0.9" width="11.8" height="2.6" fill="#b0b0b0"/></svg>
<svg style="left:237.6px;top:828.8px;" width="12" height="8" viewBox="0 0 12 8"><g fill="#8c8c8c"><circle cx="1.6" cy="1.6" r="1.25"/><circle cx="5.8" cy="1.6" r="1.25"/><circle cx="10.0" cy="1.6" r="1.25"/><circle cx="1.6" cy="5.6" r="1.25"/><circle cx="5.8" cy="5.6" r="1.25"/><circle cx="10.0" cy="5.6" r="1.25"/></g></svg>
<svg style="left:236.5px;top:844.6px;" width="14.600000000000001" height="10" viewBox="0 0 14.600000000000001 10"><circle cx="3.2" cy="5" r="2.2" fill="#f5821f"/><path d="M3.2 5H10.200000000000001" fill="none" stroke="#f5821f" stroke-width="1.3"/><path d="M9.000000000000002 2.4L12.8 5L9.000000000000002 7.6000000000000005Z" fill="#f5821f"/></svg>
<div style="left:259.7px;top:645px;width:69.3px;height:68.6px;background:#2f2f2f;border-radius:3px;"></div>
<svg style="left:259px;top:645px;" width="71" height="69" viewBox="0 0 71 69"><path d="M5.2 26.5H65.6" stroke="#e4e4e4" stroke-width="1.3"/><path d="M5.2 26.5 L6.2 24.3 L7.2 22.2 L8.2 20.1 L9.2 18.1 L10.2 16.2 L11.2 14.4 L12.2 12.7 L13.3 11.2 L14.3 9.8 L15.3 8.7 L16.3 7.7 L17.3 6.9 L18.3 6.4 L19.3 6.0 L20.3 5.9 L21.3 6.0 L22.3 6.4 L23.3 6.9 L24.3 7.7 L25.3 8.7 L26.3 9.8 L27.3 11.2 L28.4 12.7 L29.4 14.4 L30.4 16.2 L31.4 18.1 L32.4 20.1 L33.4 22.2 L34.4 24.3 L35.4 26.5 L36.4 28.7 L37.4 30.8 L38.4 32.9 L39.4 34.9 L40.4 36.8 L41.4 38.6 L42.4 40.3 L43.5 41.8 L44.5 43.2 L45.5 44.3 L46.5 45.3 L47.5 46.1 L48.5 46.6 L49.5 47.0 L50.5 47.1 L51.5 47.0 L52.5 46.6 L53.5 46.1 L54.5 45.3 L55.5 44.3 L56.5 43.2 L57.5 41.8 L58.6 40.3 L59.6 38.6 L60.6 36.8 L61.6 34.9 L62.6 32.9 L63.6 30.8 L64.6 28.7 L65.6 26.5" fill="none" stroke="#f5821f" stroke-width="1.1"/><circle cx="49.4" cy="27.4" r="2.7" fill="#f8f8f8"/></svg>
<span class="t" style="top:649.70px;font-size:10px;color:#b4c0cc;left:307.10px;transform:scaleX(0.985);transform-origin:0 50%;">MW</span>
<svg style="left:284.7px;top:700.6px;" width="20.3" height="10" viewBox="0 0 20.3 10"><circle cx="4.5" cy="5" r="3.5" fill="#2cc2f6"/><path d="M4.5 5H15.100000000000001" fill="none" stroke="#2cc2f6" stroke-width="1.5"/><path d="M13.900000000000002 1.5999999999999999L18.5 5L13.900000000000002 8.399999999999999Z" fill="#2cc2f6"/></svg>
<div style="left:259.7px;top:717.5px;width:69.3px;height:68.3px;background:#2f2f2f;border-radius:3px;"></div>
<span class="t" style="top:721.91px;font-size:11px;color:#c8c8c8;left:266.50px;transform:scaleX(0.941);transform-origin:0 50%;">Expressions</span>
<span class="t" style="top:738.60px;font-size:10px;color:#2ee28e;font-weight:bold;left:270.90px;transform:scaleX(0.818);transform-origin:0 50%;">VEL</span>
<span class="t" style="top:738.60px;font-size:10px;color:#2ee28e;font-weight:bold;left:300.40px;transform:scaleX(0.884);transform-origin:0 50%;">TIMB</span>
<span class="t" style="top:762.70px;font-size:10px;color:#2ee28e;font-weight:bold;left:270.90px;transform:scaleX(0.795);transform-origin:0 50%;">REL</span>
<span class="t" style="top:762.70px;font-size:10px;color:#2ee28e;font-weight:bold;left:300.40px;transform:scaleX(0.764);transform-origin:0 50%;">PRES</span>
<svg style="left:269.3px;top:748.7px;" width="19.5" height="10" viewBox="0 0 19.5 10"><circle cx="4.3" cy="5" r="3.3" fill="#2ee28e"/><path d="M4.3 5H14.3" fill="none" stroke="#2ee28e" stroke-width="1.5"/><path d="M13.100000000000001 1.5999999999999999L17.7 5L13.100000000000001 8.399999999999999Z" fill="#2ee28e"/></svg>
<svg style="left:302.09999999999997px;top:748.7px;" width="19.9" height="10" viewBox="0 0 19.9 10"><circle cx="4.3" cy="5" r="3.3" fill="#2ee28e"/><path d="M4.3 5H14.7" fill="none" stroke="#2ee28e" stroke-width="1.5"/><path d="M13.5 1.5999999999999999L18.099999999999998 5L13.5 8.399999999999999Z" fill="#2ee28e"/></svg>
<svg style="left:269.3px;top:772.8px;" width="19.5" height="10" viewBox="0 0 19.5 10"><circle cx="4.3" cy="5" r="3.3" fill="#2ee28e"/><path d="M4.3 5H14.3" fill="none" stroke="#2ee28e" stroke-width="1.5"/><path d="M13.100000000000001 1.5999999999999999L17.7 5L13.100000000000001 8.399999999999999Z" fill="#2ee28e"/></svg>
<svg style="left:301.3px;top:772.8px;" width="19.9" height="10" viewBox="0 0 19.9 10"><circle cx="4.3" cy="5" r="3.3" fill="#2ee28e"/><path d="M4.3 5H14.7" fill="none" stroke="#2ee28e" stroke-width="1.5"/><path d="M13.5 1.5999999999999999L18.099999999999998 5L13.5 8.399999999999999Z" fill="#2ee28e"/></svg>
<svg style="left:288.4px;top:817.4px;" width="12" height="12" viewBox="0 0 12 12"><path d="M6 1.5V10.5M1.5 6H10.5" stroke="#828282" stroke-width="3"/></svg>
<div style="left:332px;top:645px;width:212.8px;height:140.4px;background:#2f2f2f;border-radius:3px;"></div>
<span class="t" style="top:649.81px;font-size:11px;color:#f2c83c;left:426.40px;transform:scaleX(0.923);transform-origin:0 50%;">Pulse</span>
<svg style="left:479.6px;top:653.4px;" width="6" height="5" viewBox="0 0 6 5"><path d="M0.3 0.4H5.5L2.9 3.8Z" fill="#f2c83c"/></svg>
<svg style="left:359px;top:673px;" width="11" height="13" viewBox="0 0 11 13"><path d="M1 3.8L3.6 5.6L1 7.4Z" fill="#8c8c8c"/><path d="M6.6 12V1.6M4.4 3.8L6.6 1.2L8.8 3.8" fill="none" stroke="#a8a8a8" stroke-width="1.1"/></svg>
<svg style="left:350.3px;top:699.2px;" width="32.4" height="32.4" viewBox="0 0 32.4 32.4"><path d="M6.87 25.53A13.2 13.2 0 1 1 25.53 25.53" fill="none" stroke="#505050" stroke-width="2.2"/><circle cx="16.2" cy="16.2" r="8.5" fill="#4f4f4f"/><path d="M7.99 18.41A8.5 8.5 0 1 1 24.41 18.41Z" fill="#6c6c6c"/><path d="M14.16 18.24L10.43 21.97" stroke="#f6f6f6" stroke-width="2.8"/></svg>
<svg style="left:360px;top:729px;" width="13" height="13" viewBox="0 0 13 13"><g fill="none" stroke="#b66cf2" stroke-width="1.3"><path d="M2.4 8.2A4.4 4.4 0 0 1 9.4 3.2"/><path d="M10.6 4.8A4.4 4.4 0 0 1 3.6 9.8"/></g><path d="M8 1L11.6 2L9.4 5Z" fill="#b66cf2"/><path d="M5 12L1.4 11L3.6 8Z" fill="#b66cf2"/></svg>
<svg style="left:390.6px;top:691.6px;" width="47.6" height="47.6" viewBox="0 0 47.6 47.6"><path d="M9.09 38.51A20.8 20.8 0 1 1 38.51 38.51" fill="none" stroke="#505050" stroke-width="2.2"/><path d="M9.09 38.51A20.8 20.8 0 0 1 16.01 4.51" fill="none" stroke="#f2c83c" stroke-width="2.3"/><circle cx="23.8" cy="23.8" r="15.6" fill="#c8c8c8"/><path d="M9.02 18.81A15.6 15.6 0 0 1 38.58 18.81Z" fill="#f2f2f2"/><path d="M22.28 20.04L18.07 9.63" stroke="#141414" stroke-width="2.5"/></svg>
<span class="t" style="top:736.61px;font-size:11px;color:#c8d2dc;left:406.70px;transform:scaleX(0.920);transform-origin:0 50%;">PW</span>
<svg style="left:444px;top:701px;" width="37" height="29" viewBox="0 0 37 29"><rect x="1.4" y="1.6" width="34" height="25.8" fill="none" stroke="#555" stroke-width="1"/><path d="M1.4 14.5H35.4" stroke="#555" stroke-width="1"/><path d="M9.9 3V26M18.4 3V26M26.9 3V26" stroke="#4a4a4a" stroke-width="0.8" stroke-dasharray="0.8 2.2"/><path d="M1.6 27.2V1.6H16V27.2H35.4V2.2" fill="none" stroke="#f2c83c" stroke-width="1.4"/></svg>
<svg style="left:486.7px;top:691.6px;" width="47.6" height="47.6" viewBox="0 0 47.6 47.6"><path d="M9.09 38.51A20.8 20.8 0 1 1 38.51 38.51" fill="none" stroke="#505050" stroke-width="2.2"/><circle cx="23.8" cy="23.8" r="15.6" fill="#c8c8c8"/><path d="M9.02 18.81A15.6 15.6 0 0 1 38.58 18.81Z" fill="#f2f2f2"/><path d="M21.14 26.86L13.77 35.34" stroke="#141414" stroke-width="2.5"/></svg>
<span class="t" style="top:737.11px;font-size:11px;color:#c8d2dc;left:499.30px;transform:scaleX(0.920);transform-origin:0 50%;">Sync</span>
<svg style="left:355.4px;top:765.6px;" width="23" height="12" viewBox="0 0 23 12"><path d="M0.4 6L3.8 3.3V8.7Z" fill="#f5821f"/><path d="M22.4 6L19 3.3V8.7Z" fill="#f5821f"/><g fill="#f5821f"><rect x="5.60" y="0.4" width="2.1" height="11"/><rect x="8.70" y="0.4" width="2.1" height="11"/><rect x="11.80" y="0.4" width="2.1" height="11"/><rect x="14.90" y="0.4" width="2.1" height="11"/><rect x="7.65" y="6.8" width="1.1" height="4.6" opacity="0.82"/><rect x="10.75" y="6.8" width="1.1" height="4.6" opacity="0.82"/><rect x="13.85" y="6.8" width="1.1" height="4.6" opacity="0.82"/></g></svg>
<span class="t" style="top:767.91px;font-size:11px;color:#f5821f;left:399.00px;transform:scaleX(1.040);transform-origin:0 50%;">1:1</span>
<span class="t" style="top:767.91px;font-size:11px;color:#f5821f;left:434.60px;transform:scaleX(0.995);transform-origin:0 50%;">0.00</span>
<span class="t" style="top:767.91px;font-size:11px;color:#f5821f;left:464.90px;transform:scaleX(0.923);transform-origin:0 50%;">st</span>
<span class="t" style="top:766.72px;font-size:12px;color:#5a5a5a;left:485.00px;transform:scaleX(1.093);transform-origin:0 50%;">±</span>
<span class="t" style="top:767.91px;font-size:11px;color:#f5821f;left:497.70px;transform:scaleX(0.981);transform-origin:0 50%;">0.00 Hz</span>
<div style="left:332px;top:789px;width:141px;height:68.7px;background:#2f2f2f;border-radius:3px;"></div>
<svg style="left:346.1px;top:802.8px;" width="40.4" height="40.4" viewBox="0 0 40.4 40.4"><path d="M8.04 32.36A17.2 17.2 0 1 1 32.36 32.36" fill="none" stroke="#505050" stroke-width="2.2"/><path d="M8.04 32.36A17.2 17.2 0 0 1 6.65 9.61" fill="none" stroke="#b66cf2" stroke-width="2.3"/><circle cx="20.2" cy="20.2" r="11.9" fill="#4f4f4f"/><path d="M8.71 23.29A11.9 11.9 0 1 1 31.69 23.29Z" fill="#6c6c6c"/><path d="M17.01 17.71L11.20 13.17" stroke="#f6f6f6" stroke-width="3.1"/></svg>
<span class="t" style="top:841.61px;font-size:11px;color:#c8d2dc;left:357.10px;transform:scaleX(0.930);transform-origin:0 50%;">Sub</span>
<svg style="left:395px;top:801px;" width="60" height="30" viewBox="0 0 60 30"><g fill="none" stroke="#7c5ca4" stroke-width="1.2"><path d="M1.2 6.6C3.4 -0.6 6.4 -0.6 9.2 6.6C12 13.6 15 13.6 17.2 6.6"/><path d="M21.2 6.6C23.4 -0.6 26 0 28.4 5.4H37"/><path d="M41 11.4L49 1.6L57 11.4"/></g><path d="M9.4 18.4H16.6V26.8H25" fill="none" stroke="#8c6aac" stroke-width="1.6"/><path d="M29.2 18.4H34.6V26.8H45.2" fill="none" stroke="#c272ff" stroke-width="2.1"/></svg>
<span class="t" style="top:839.01px;font-size:11px;color:#c8d2dc;left:399.04px;">0</span>
<span class="t" style="top:839.01px;font-size:11px;color:#b66cf2;left:417.31px;transform:scaleX(0.982);transform-origin:50% 50%;">-1</span>
<span class="t" style="top:839.01px;font-size:11px;color:#c8d2dc;left:438.21px;transform:scaleX(1.023);transform-origin:50% 50%;">-2</span>
<div style="left:412px;top:851.1px;width:20.1px;height:2.9px;background:#c272ff;"></div>
<div style="left:346.8px;top:783px;width:39.3px;height:9.2px;background:#8e8e8e;border-radius:3px;"></div>
<span class="t" style="top:784.27px;font-size:7px;color:#2a2a2a;font-weight:bold;left:356.78px;transform:scaleX(0.951);transform-origin:50% 50%;">SYNC</span>
<svg style="left:348.6px;top:784px;" width="8" height="7.4" viewBox="0 0 8 7.4"><path d="M4 0.4L7.4 4H5.4V7H2.6V4H0.6Z" fill="#2a2a2a"/></svg>
<svg style="left:376.4px;top:784px;" width="8" height="7.4" viewBox="0 0 8 7.4"><path d="M4 0.4L7.4 4H5.4V7H2.6V4H0.6Z" fill="#2a2a2a"/></svg>
<div style="left:476.2px;top:789px;width:68.6px;height:68.7px;background:#2f2f2f;border-radius:3px;"></div>
<svg style="left:490.2px;top:802.8px;" width="40.4" height="40.4" viewBox="0 0 40.4 40.4"><path d="M8.04 32.36A17.2 17.2 0 1 1 32.36 32.36" fill="none" stroke="#505050" stroke-width="2.2"/><circle cx="20.2" cy="20.2" r="11.9" fill="#4f4f4f"/><path d="M8.71 23.29A11.9 11.9 0 1 1 31.69 23.29Z" fill="#6c6c6c"/><path d="M17.71 23.39L13.17 29.20" stroke="#f6f6f6" stroke-width="3.1"/></svg>
<span class="t" style="top:841.61px;font-size:11px;color:#c8d2dc;left:497.30px;transform:scaleX(0.978);transform-origin:0 50%;">Noise</span>
<div style="left:544.8px;top:673.5px;width:2.9px;height:12.5px;background:#2f2f2f;"></div>
<div style="left:761px;top:673.5px;width:3px;height:12.5px;background:#2f2f2f;"></div>
<div style="left:560px;top:785.4px;width:13px;height:3.6px;background:#2f2f2f;"></div>
<div style="left:547.7px;top:645px;width:213.3px;height:140.4px;background:#2f2f2f;border-radius:3px;"></div>
<svg style="left:560px;top:649px;" width="13" height="13" viewBox="0 0 13 13"><path d="M3.9 3A4.6 4.6 0 1 0 9.1 3" fill="none" stroke="#2ecf9a" stroke-width="1.7"/><path d="M6.5 0.8V6" stroke="#2ecf9a" stroke-width="1.7"/></svg>
<span class="t" style="top:650.21px;font-size:11px;color:#2ecf9a;left:624.30px;transform:scaleX(0.952);transform-origin:0 50%;">Low-pass SK</span>
<svg style="left:691.6px;top:653.6px;" width="6" height="5" viewBox="0 0 6 5"><path d="M0.3 0.4H5.5L2.9 3.8Z" fill="#2ecf9a"/></svg>
<svg style="left:562px;top:673px;" width="9" height="13" viewBox="0 0 9 13"><path d="M4.5 1.6V11.4M2.2 3.8L4.5 1L6.8 3.8M2.2 9.2L4.5 12L6.8 9.2" fill="none" stroke="#d0d0d0" stroke-width="1.2"/></svg>
<svg style="left:582.4px;top:663.0px;" width="32.4" height="32.4" viewBox="0 0 32.4 32.4"><path d="M6.87 25.53A13.2 13.2 0 1 1 25.53 25.53" fill="none" stroke="#505050" stroke-width="2.2"/><path d="M16.20 4.00L16.20 1.80" stroke="#2ecf9a" stroke-width="1.6"/><circle cx="16.2" cy="16.2" r="8.5" fill="#4f4f4f"/><path d="M7.99 18.41A8.5 8.5 0 1 1 24.41 18.41Z" fill="#6c6c6c"/><path d="M16.20 13.31L16.20 8.04" stroke="#f6f6f6" stroke-width="2.8"/></svg>
<svg style="left:555.2px;top:709.8px;" width="23" height="12" viewBox="0 0 23 12"><path d="M0.4 6L3.8 3.3V8.7Z" fill="#f5821f"/><path d="M22.4 6L19 3.3V8.7Z" fill="#f5821f"/><g fill="#f5821f"><rect x="5.60" y="0.4" width="2.1" height="11"/><rect x="8.70" y="0.4" width="2.1" height="11"/><rect x="11.80" y="0.4" width="2.1" height="11"/><rect x="14.90" y="0.4" width="2.1" height="11"/><rect x="7.65" y="6.8" width="1.1" height="4.6" opacity="0.82"/><rect x="10.75" y="6.8" width="1.1" height="4.6" opacity="0.82"/><rect x="13.85" y="6.8" width="1.1" height="4.6" opacity="0.82"/></g></svg>
<svg style="left:582.4px;top:698.7px;" width="32.4" height="32.4" viewBox="0 0 32.4 32.4"><path d="M6.87 25.53A13.2 13.2 0 1 1 25.53 25.53" fill="none" stroke="#505050" stroke-width="2.2"/><path d="M6.87 25.53A13.2 13.2 0 0 1 13.01 3.39" fill="none" stroke="#f5821f" stroke-width="2.3"/><circle cx="16.2" cy="16.2" r="8.5" fill="#4f4f4f"/><path d="M7.99 18.41A8.5 8.5 0 1 1 24.41 18.41Z" fill="#6c6c6c"/><path d="M15.50 13.40L14.23 8.28" stroke="#f6f6f6" stroke-width="2.8"/></svg>
<svg style="left:559.6px;top:746px;" width="15" height="11" viewBox="0 0 15 11"><path d="M0.8 10C2.4 9 2.8 0.4 4.6 1.2C6.4 2 6 6.4 8 6.6C10 6.8 10.4 9.4 13.6 9.8" fill="none" stroke="#d0d0d0" stroke-width="1.1"/></svg>
<svg style="left:582.4px;top:734.1px;" width="32.4" height="32.4" viewBox="0 0 32.4 32.4"><path d="M6.87 25.53A13.2 13.2 0 1 1 25.53 25.53" fill="none" stroke="#505050" stroke-width="2.2"/><path d="M16.20 3.00A13.2 13.2 0 0 1 25.03 6.39" fill="none" stroke="#2ecf9a" stroke-width="2.3"/><circle cx="16.2" cy="16.2" r="8.5" fill="#4f4f4f"/><path d="M7.99 18.41A8.5 8.5 0 1 1 24.41 18.41Z" fill="#6c6c6c"/><path d="M18.24 14.16L21.97 10.43" stroke="#f6f6f6" stroke-width="2.8"/></svg>
<svg style="left:622.3px;top:683.4px;" width="64" height="64" viewBox="0 0 64 64"><path d="M11.49 52.51A29 29 0 1 1 52.51 52.51" fill="none" stroke="#505050" stroke-width="2.2"/><path d="M11.49 52.51A29 29 0 0 1 32.00 3.00" fill="none" stroke="#2ecf9a" stroke-width="2.4"/><circle cx="32" cy="32" r="22.9" fill="#c8c8c8"/><path d="M10.30 24.67A22.9 22.9 0 0 1 53.70 24.67Z" fill="#f2f2f2"/><path d="M32.00 26.05L32.00 9.56" stroke="#141414" stroke-width="2.8"/></svg>
<span class="t" style="top:744.71px;font-size:11px;color:#c8d2dc;left:637.10px;transform:scaleX(1.010);transform-origin:0 50%;">807 Hz</span>
<svg style="left:698.6px;top:691.6px;" width="47.6" height="47.6" viewBox="0 0 47.6 47.6"><path d="M9.09 38.51A20.8 20.8 0 1 1 38.51 38.51" fill="none" stroke="#505050" stroke-width="2.2"/><path d="M9.09 38.51A20.8 20.8 0 0 1 6.56 35.43" fill="none" stroke="#2ecf9a" stroke-width="2.3"/><circle cx="23.8" cy="23.8" r="15.4" fill="#c8c8c8"/><path d="M9.21 18.87A15.4 15.4 0 0 1 38.39 18.87Z" fill="#f2f2f2"/><path d="M20.33 25.80L10.73 31.35" stroke="#141414" stroke-width="2.5"/></svg>
<svg style="left:745.6px;top:712.6px;" width="6" height="7" viewBox="0 0 6 7"><path d="M5.4 0.4V6.4L0.4 3.4Z" fill="#7a7a7a"/></svg>
<svg style="left:715.4px;top:736.6px;" width="14" height="12" viewBox="0 0 14 12"><path d="M0.8 10.6C4.6 10 6 6 7 0.8C8 6 9.4 10 13.2 10.6" fill="#7e7e7e" stroke="#9a9a9a" stroke-width="0.9"/></svg>
<span class="t" style="top:767.11px;font-size:11px;color:#c8d2dc;left:625.30px;transform:scaleX(1.005);transform-origin:0 50%;">12</span>
<span class="t" style="top:767.11px;font-size:11px;color:#c8d2dc;left:648.40px;transform:scaleX(1.014);transform-origin:0 50%;">18</span>
<span class="t" style="top:767.11px;font-size:11px;color:#2ecf9a;left:671.00px;transform:scaleX(1.014);transform-origin:0 50%;">24</span>
<div style="left:665.9px;top:779.4px;width:23.1px;height:2.8px;background:#2ecf9a;"></div>
<svg style="left:702.4px;top:766.6px;" width="15" height="11" viewBox="0 0 15 11"><path d="M1 0.6V9.6H13.6M6.2 9.6V4.6M11 9.6V6.8" fill="none" stroke="#2ecf9a" stroke-width="1.2"/></svg>
<div style="left:696px;top:779.4px;width:25.9px;height:2.8px;background:#2ecf9a;"></div>
<svg style="left:728.4px;top:766.6px;" width="15" height="11" viewBox="0 0 15 11"><path d="M1 0.6V9.6H13.8M3.6 9.6V1.6M6.2 9.6V3.4M8.8 9.6V5.2M11.4 9.6V7" fill="none" stroke="#c8d2dc" stroke-width="1.1"/></svg>
<div style="left:547.7px;top:789px;width:213.3px;height:68.7px;background:#2f2f2f;border-radius:3px;"></div>
<span class="t" style="top:808.70px;font-size:10px;color:#2ee28e;font-weight:bold;left:560.60px;transform:scaleX(0.783);transform-origin:0 50%;">FEG</span>
<svg style="left:558.7px;top:818.9px;" width="20.599999999999998" height="10" viewBox="0 0 20.599999999999998 10"><circle cx="4.4" cy="5" r="3.4" fill="#2ee28e"/><path d="M4.4 5H15.400000000000002" fill="none" stroke="#2ee28e" stroke-width="1.5"/><path d="M14.200000000000003 1.5999999999999999L18.8 5L14.200000000000003 8.399999999999999Z" fill="#2ee28e"/></svg>
<svg style="left:558.4px;top:841px;" width="20" height="11" viewBox="0 0 20 11"><path d="M1 5.4L4 3.2V7.6Z" fill="#8c8c8c"/><path d="M6.4 9.6C7.8 8.8 8.2 0.8 9.8 1.4C11.4 2 11 5.8 12.8 6C14.6 6.2 15 8.8 18 9.2" fill="none" stroke="#a8a8a8" stroke-width="1.1"/></svg>
<svg style="left:589.7px;top:803.1px;" width="40.4" height="40.4" viewBox="0 0 40.4 40.4"><path d="M8.04 32.36A17.2 17.2 0 1 1 32.36 32.36" fill="none" stroke="#505050" stroke-width="2.2"/><path d="M8.04 32.36A17.2 17.2 0 0 1 5.01 28.27" fill="none" stroke="#2ecf9a" stroke-width="2.3"/><circle cx="20.2" cy="20.2" r="11.9" fill="#4f4f4f"/><path d="M8.71 23.29A11.9 11.9 0 1 1 31.69 23.29Z" fill="#6c6c6c"/><path d="M16.22 20.90L8.95 22.18" stroke="#f6f6f6" stroke-width="3.1"/></svg>
<svg style="left:630.3px;top:803.1px;" width="40.4" height="40.4" viewBox="0 0 40.4 40.4"><path d="M8.04 32.36A17.2 17.2 0 1 1 32.36 32.36" fill="none" stroke="#505050" stroke-width="2.2"/><path d="M8.04 32.36A17.2 17.2 0 0 1 19.00 3.04" fill="none" stroke="#2ecf9a" stroke-width="2.3"/><circle cx="20.2" cy="20.2" r="11.9" fill="#4f4f4f"/><path d="M8.71 23.29A11.9 11.9 0 1 1 31.69 23.29Z" fill="#6c6c6c"/><path d="M19.92 16.16L19.40 8.80" stroke="#f6f6f6" stroke-width="3.1"/></svg>
<svg style="left:670.1px;top:803.1px;" width="40.4" height="40.4" viewBox="0 0 40.4 40.4"><path d="M8.04 32.36A17.2 17.2 0 1 1 32.36 32.36" fill="none" stroke="#505050" stroke-width="2.2"/><path d="M8.04 32.36A17.2 17.2 0 0 1 6.65 9.61" fill="none" stroke="#2ecf9a" stroke-width="2.3"/><circle cx="20.2" cy="20.2" r="11.9" fill="#4f4f4f"/><path d="M8.71 23.29A11.9 11.9 0 1 1 31.69 23.29Z" fill="#6c6c6c"/><path d="M17.10 17.60L11.45 12.86" stroke="#f6f6f6" stroke-width="3.1"/></svg>
<svg style="left:710.5px;top:803.1px;" width="40.4" height="40.4" viewBox="0 0 40.4 40.4"><path d="M8.04 32.36A17.2 17.2 0 1 1 32.36 32.36" fill="none" stroke="#505050" stroke-width="2.2"/><path d="M8.04 32.36A17.2 17.2 0 0 1 4.49 13.20" fill="none" stroke="#2ecf9a" stroke-width="2.3"/><circle cx="20.2" cy="20.2" r="11.9" fill="#4f4f4f"/><path d="M8.71 23.29A11.9 11.9 0 1 1 31.69 23.29Z" fill="#6c6c6c"/><path d="M16.63 18.30L10.11 14.84" stroke="#f6f6f6" stroke-width="3.1"/></svg>
<span class="t" style="top:842.11px;font-size:11px;color:#c8d2dc;left:606.23px;">A</span>
<span class="t" style="top:842.11px;font-size:11px;color:#c8d2dc;left:646.53px;">D</span>
<span class="t" style="top:842.11px;font-size:11px;color:#c8d2dc;left:686.63px;">S</span>
<span class="t" style="top:842.11px;font-size:11px;color:#c8d2dc;left:726.73px;">R</span>
<div style="left:764px;top:645px;width:181px;height:140.6px;background:#2f2f2f;border-radius:3px;"></div>
<span class="t" style="top:650.11px;font-size:11px;color:#4a9cec;left:840.10px;transform:scaleX(0.910);transform-origin:0 50%;">ADSR</span>
<svg style="left:875.6px;top:653.6px;" width="6" height="5" viewBox="0 0 6 5"><path d="M0.3 0.4H5.5L2.9 3.8Z" fill="#4a9cec"/></svg>
<svg style="left:916.9px;top:650.5px;" width="20.4" height="10" viewBox="0 0 20.4 10"><circle cx="4.4" cy="5" r="3.4" fill="#2ee28e"/><path d="M4.4 5H15.2" fill="none" stroke="#2ee28e" stroke-width="1.5"/><path d="M14.0 1.5999999999999999L18.599999999999998 5L14.0 8.399999999999999Z" fill="#2ee28e"/></svg>
<svg style="left:775px;top:660px;" width="160" height="62" viewBox="0 0 160 62"><path d="M7.6 7.6H152M7.6 56.7H152" stroke="#555" stroke-width="1"/><path d="M7.6 56.7L10.2 25.6L13.3 7.6L20.4 15.3L27.4 18.7" fill="none" stroke="#4a98e6" stroke-width="1.1"/><path d="M27.4 18.7L103.2 18.7" fill="none" stroke="#4a98e6" stroke-width="1.1" stroke-dasharray="3.4 2.6"/><path d="M103.2 18.7L112.7 46.4L121.7 56.7" fill="none" stroke="#4a98e6" stroke-width="1.1"/><circle cx="10.2" cy="25.6" r="2.8" fill="#4a98e6"/><circle cx="13.3" cy="7.6" r="2.8" fill="#4a98e6"/><circle cx="20.4" cy="15.3" r="2.8" fill="#4a98e6"/><circle cx="27.4" cy="18.7" r="2.8" fill="#4a98e6"/><circle cx="112.7" cy="46.4" r="2.8" fill="#4a98e6"/><circle cx="121.7" cy="56.7" r="2.8" fill="#4a98e6"/></svg>
<svg style="left:774.0px;top:731.2px;" width="40.4" height="40.4" viewBox="0 0 40.4 40.4"><path d="M8.04 32.36A17.2 17.2 0 1 1 32.36 32.36" fill="none" stroke="#505050" stroke-width="2.2"/><path d="M8.04 32.36A17.2 17.2 0 0 1 3.84 25.52" fill="none" stroke="#4a9cec" stroke-width="2.3"/><circle cx="20.2" cy="20.2" r="11.8" fill="#c8c8c8"/><path d="M9.02 16.42A11.8 11.8 0 0 1 31.38 16.42Z" fill="#f2f2f2"/><path d="M17.22 20.94L8.98 23.00" stroke="#141414" stroke-width="2.4"/></svg>
<svg style="left:814.3px;top:731.2px;" width="40.4" height="40.4" viewBox="0 0 40.4 40.4"><path d="M8.04 32.36A17.2 17.2 0 1 1 32.36 32.36" fill="none" stroke="#505050" stroke-width="2.2"/><path d="M8.04 32.36A17.2 17.2 0 0 1 5.01 12.13" fill="none" stroke="#4a9cec" stroke-width="2.3"/><circle cx="20.2" cy="20.2" r="11.8" fill="#c8c8c8"/><path d="M9.02 16.42A11.8 11.8 0 0 1 31.38 16.42Z" fill="#f2f2f2"/><path d="M17.54 18.67L10.19 14.42" stroke="#141414" stroke-width="2.4"/></svg>
<svg style="left:854.1px;top:731.2px;" width="40.4" height="40.4" viewBox="0 0 40.4 40.4"><path d="M8.04 32.36A17.2 17.2 0 1 1 32.36 32.36" fill="none" stroke="#505050" stroke-width="2.2"/><path d="M8.04 32.36A17.2 17.2 0 1 1 36.36 14.32" fill="none" stroke="#4a9cec" stroke-width="2.3"/><circle cx="20.2" cy="20.2" r="11.8" fill="#c8c8c8"/><path d="M9.02 16.42A11.8 11.8 0 0 1 31.38 16.42Z" fill="#f2f2f2"/><path d="M23.12 19.25L31.20 16.63" stroke="#141414" stroke-width="2.4"/></svg>
<svg style="left:894.4px;top:731.2px;" width="40.4" height="40.4" viewBox="0 0 40.4 40.4"><path d="M8.04 32.36A17.2 17.2 0 1 1 32.36 32.36" fill="none" stroke="#505050" stroke-width="2.2"/><path d="M8.04 32.36A17.2 17.2 0 0 1 10.09 6.28" fill="none" stroke="#4a9cec" stroke-width="2.3"/><circle cx="20.2" cy="20.2" r="11.8" fill="#c8c8c8"/><path d="M9.02 16.42A11.8 11.8 0 0 1 31.38 16.42Z" fill="#f2f2f2"/><path d="M18.48 17.66L13.73 10.61" stroke="#141414" stroke-width="2.4"/></svg>
<span class="t" style="top:769.11px;font-size:11px;color:#c8d2dc;left:790.53px;">A</span>
<span class="t" style="top:769.11px;font-size:11px;color:#c8d2dc;left:830.53px;">D</span>
<span class="t" style="top:769.11px;font-size:11px;color:#c8d2dc;left:870.63px;">S</span>
<span class="t" style="top:769.11px;font-size:11px;color:#c8d2dc;left:910.63px;">R</span>
<div style="left:764px;top:789px;width:181px;height:68.7px;background:#2f2f2f;border-radius:3px;"></div>
<svg style="left:782.2px;top:803.1px;" width="40.4" height="40.4" viewBox="0 0 40.4 40.4"><path d="M8.04 32.36A17.2 17.2 0 1 1 32.36 32.36" fill="none" stroke="#505050" stroke-width="2.2"/><path d="M8.04 32.36A17.2 17.2 0 1 1 33.75 30.79" fill="none" stroke="#e8203e" stroke-width="2.4"/><circle cx="20.2" cy="20.2" r="11.9" fill="#4f4f4f"/><path d="M8.71 23.29A11.9 11.9 0 1 1 31.69 23.29Z" fill="#6c6c6c"/><path d="M16.35 21.45L9.34 23.73" stroke="#f6f6f6" stroke-width="3.1"/></svg>
<svg style="left:792px;top:841px;" width="14" height="11" viewBox="0 0 14 11"><path d="M1.4 9.6C3 3 5 1.8 12 1.8" fill="none" stroke="#b0b0b0" stroke-width="1.1"/></svg>
<svg style="left:834.1px;top:803.1px;" width="40.4" height="40.4" viewBox="0 0 40.4 40.4"><path d="M8.04 32.36A17.2 17.2 0 1 1 32.36 32.36" fill="none" stroke="#505050" stroke-width="2.2"/><path d="M20.20 4.00L20.20 1.80" stroke="#e8203e" stroke-width="1.6"/><circle cx="20.2" cy="20.2" r="11.9" fill="#4f4f4f"/><path d="M8.71 23.29A11.9 11.9 0 1 1 31.69 23.29Z" fill="#6c6c6c"/><path d="M20.20 16.15L20.20 8.78" stroke="#f6f6f6" stroke-width="3.1"/></svg>
<span class="t" style="top:842.01px;font-size:11px;color:#c8d2dc;left:843.50px;transform:scaleX(0.965);transform-origin:0 50%;">Pitch</span>
<div style="left:872.4px;top:823.2px;width:16.2px;height:1.2px;background:#555;"></div>
<svg style="left:886.2px;top:803.1px;" width="40.4" height="40.4" viewBox="0 0 40.4 40.4"><path d="M8.04 32.36A17.2 17.2 0 1 1 32.36 32.36" fill="none" stroke="#505050" stroke-width="2.2"/><circle cx="20.2" cy="20.2" r="11.9" fill="#4f4f4f"/><path d="M8.71 23.29A11.9 11.9 0 1 1 31.69 23.29Z" fill="#6c6c6c"/><path d="M17.71 23.39L13.17 29.20" stroke="#f6f6f6" stroke-width="3.1"/></svg>
<span class="t" style="top:842.01px;font-size:11px;color:#c8d2dc;left:894.30px;transform:scaleX(0.950);transform-origin:0 50%;">Glide</span>
<div style="left:925.2px;top:841.8px;width:10.8px;height:10.2px;background:#a8a8a8;border-radius:2px;"></div>
<span class="t" style="top:842.84px;font-size:8.5px;color:#2f2f2f;font-weight:bold;left:928.10px;">L</span>
<div style="left:948px;top:645.3px;width:77px;height:28.2px;background:#2f2f2f;border-radius:3px;"></div>
<svg style="left:950.6px;top:648.3px;" width="73" height="5" viewBox="0 0 73 5"><path d="M0.8 4.4V0.8H71.4V4.4" fill="none" stroke="#56789a" stroke-width="1.3"/></svg>
<span class="t" style="top:655.80px;font-size:10px;color:#f0f0f0;font-weight:bold;left:967.91px;transform:scaleX(0.985);transform-origin:50% 50%;">Note FX</span>
<div style="left:948px;top:677.4px;width:77px;height:28.2px;background:#2f2f2f;border-radius:3px;"></div>
<svg style="left:950.6px;top:680.4px;" width="73" height="5" viewBox="0 0 73 5"><path d="M0.8 4.4V0.8H71.4V4.4" fill="none" stroke="#56789a" stroke-width="1.3"/></svg>
<span class="t" style="top:687.90px;font-size:10px;color:#f0f0f0;font-weight:bold;left:980.41px;transform:scaleX(0.947);transform-origin:50% 50%;">FX</span>
<svg style="left:953.9px;top:715.1px;" width="32.4" height="32.4" viewBox="0 0 32.4 32.4"><path d="M6.87 25.53A13.2 13.2 0 1 1 25.53 25.53" fill="none" stroke="#3c3c3c" stroke-width="2.2"/><circle cx="16.2" cy="16.2" r="8.5" fill="#4f4f4f"/><path d="M7.99 18.41A8.5 8.5 0 1 1 24.41 18.41Z" fill="#6c6c6c"/><path d="M14.16 18.24L10.43 21.97" stroke="#f6f6f6" stroke-width="2.8"/></svg>
<svg style="left:986.0px;top:715.1px;" width="32.4" height="32.4" viewBox="0 0 32.4 32.4"><path d="M6.87 25.53A13.2 13.2 0 1 1 25.53 25.53" fill="none" stroke="#3c3c3c" stroke-width="2.2"/><path d="M6.87 25.53A13.2 13.2 0 0 1 5.01 9.21" fill="none" stroke="#e8203e" stroke-width="2.3"/><circle cx="16.2" cy="16.2" r="8.5" fill="#4f4f4f"/><path d="M7.99 18.41A8.5 8.5 0 1 1 24.41 18.41Z" fill="#6c6c6c"/><path d="M13.80 14.58L9.44 11.64" stroke="#f6f6f6" stroke-width="2.8"/></svg>
<svg style="left:966px;top:745px;" width="8" height="12" viewBox="0 0 8 12"><circle cx="4" cy="3" r="2" fill="none" stroke="#c8c8c8" stroke-width="1"/><path d="M4 5V11.4" stroke="#c8c8c8" stroke-width="1.1"/></svg>
<svg style="left:997.6px;top:745.4px;" width="9" height="11" viewBox="0 0 9 11"><path d="M0.6 3.4H3L7.4 0.4V10.4L3 7.4H0.6Z" fill="#b0b0b0"/></svg>
<svg style="left:970.1px;top:759.3px;" width="32.4" height="32.4" viewBox="0 0 32.4 32.4"><path d="M6.87 25.53A13.2 13.2 0 1 1 25.53 25.53" fill="none" stroke="#3c3c3c" stroke-width="2.2"/><path d="M16.20 4.00L16.20 1.80" stroke="#e8203e" stroke-width="1.6"/><circle cx="16.2" cy="16.2" r="8.5" fill="#4f4f4f"/><path d="M7.99 18.41A8.5 8.5 0 1 1 24.41 18.41Z" fill="#6c6c6c"/><path d="M16.20 13.31L16.20 8.04" stroke="#f6f6f6" stroke-width="2.8"/></svg>
<svg style="left:980px;top:787.4px;" width="13" height="8" viewBox="0 0 13 8"><path d="M0.8 0.8L11.8 7H0.8ZM11.8 0.8L0.8 7H11.8Z" fill="#8a8a8a" stroke="#d0d0d0" stroke-width="0.9"/></svg>
<svg style="left:966.1px;top:803.1px;" width="40.4" height="40.4" viewBox="0 0 40.4 40.4"><path d="M8.04 32.36A17.2 17.2 0 1 1 32.36 32.36" fill="none" stroke="#3c3c3c" stroke-width="2.2"/><path d="M8.04 32.36A17.2 17.2 0 1 1 37.02 16.62" fill="none" stroke="#e8203e" stroke-width="2.4"/><circle cx="20.2" cy="20.2" r="11.9" fill="#4f4f4f"/><path d="M8.71 23.29A11.9 11.9 0 1 1 31.69 23.29Z" fill="#6c6c6c"/><path d="M24.18 19.50L31.45 18.22" stroke="#f6f6f6" stroke-width="3.1"/></svg>
<span class="t" style="top:842.01px;font-size:11px;color:#c8d2dc;left:977.00px;transform:scaleX(1.043);transform-origin:0 50%;">Out</span>
<!-- footer -->
<svg style="left:21px;top:887px;" width="7" height="12" viewBox="0 0 7 12"><circle cx="3.4" cy="1.9" r="1.5" fill="#f5821f"/><path d="M1 4.6H4.8V9.4H6V11H0.8V9.4H2.2V6.2H1Z" fill="#f5821f"/></svg>
<div style="left:42.2px;top:883px;width:1.6px;height:20px;background:#8a8a8a;"></div>
<span class="t" style="top:887.81px;font-size:11px;color:#f5821f;left:59.00px;transform:scaleX(0.956);transform-origin:0 50%;">ARRANGE</span>
<span class="t" style="top:887.81px;font-size:11px;color:#e4e4e4;left:126.40px;transform:scaleX(1.023);transform-origin:0 50%;">MIX</span>
<span class="t" style="top:887.81px;font-size:11px;color:#e4e4e4;left:162.70px;transform:scaleX(0.934);transform-origin:0 50%;">EDIT</span>
<div style="left:202.2px;top:883px;width:1.6px;height:19.8px;background:#8a8a8a;"></div>
<svg style="left:217.8px;top:887.4px;" width="12" height="11" viewBox="0 0 12 11"><g fill="#e8e8e8"><rect x="0" y="0" width="1.7" height="1.8"/><rect x="1.9" y="0" width="1.7" height="1.8"/><rect x="5.6" y="2.2" width="1.7" height="1.8"/><rect x="7.5" y="2.2" width="1.7" height="1.8"/><rect x="3.8" y="4.4" width="1.7" height="1.8"/><rect x="5.7" y="4.4" width="1.7" height="1.8"/><rect x="9.4" y="4.4" width="1.7" height="1.8"/><rect x="0" y="8.8" width="1.7" height="1.8"/><rect x="1.9" y="8.8" width="1.7" height="1.8"/><rect x="5.6" y="8.8" width="1.7" height="1.8"/><rect x="3.7" y="6.6" width="1.7" height="1.8"/></g></svg>
<svg style="left:248.6px;top:887px;" width="12" height="12" viewBox="0 0 12 12"><g fill="none" stroke="#e8e8e8" stroke-width="1.4"><circle cx="8.4" cy="3.4" r="2.2"/><circle cx="3.2" cy="8.4" r="2.2"/><path d="M4.8 6.8L6.8 5"/></g></svg>
<svg style="left:277.2px;top:885.4px;" width="17" height="15" viewBox="0 0 17 15"><rect x="2" y="2" width="12.8" height="10.2" rx="2.4" fill="none" stroke="#f5821f" stroke-width="2"/></svg>
<div style="left:310.9px;top:887.3px;width:2.7px;height:10.7px;background:#e8e8e8;"></div>
<div style="left:315px;top:887.3px;width:2.8px;height:10.7px;background:#e8e8e8;"></div>
<div style="left:319.2px;top:887.3px;width:2.8px;height:10.7px;background:#e8e8e8;"></div>
<span class="t" style="top:888.89px;font-size:9px;color:#dadada;font-weight:bold;left:351.30px;transform:scaleX(1.044);transform-origin:0 50%;">CLICK</span>
<span class="t" style="top:887.81px;font-size:11px;color:#8c8c8c;left:387.10px;transform:scaleX(1.021);transform-origin:0 50%;">Switch to project</span>
<span class="t" style="top:888.89px;font-size:9px;color:#dadada;font-weight:bold;left:490.50px;transform:scaleX(1.060);transform-origin:0 50%;">DRAG</span>
<span class="t" style="top:887.81px;font-size:11px;color:#8c8c8c;left:526.80px;transform:scaleX(0.982);transform-origin:0 50%;">Drag item</span>
<svg style="left:1560.4px;top:887.6px;" width="13" height="10" viewBox="0 0 13 10"><path d="M0.2 0.4H4L4.8 1.6H11.8V9.6H0.2Z" fill="#f5821f"/></svg>
<svg style="left:1592.6px;top:886.6px;" width="10" height="12" viewBox="0 0 10 12"><path d="M0.4 0.4H6L9.6 4V11.4H0.4Z" fill="#d2d2d2"/></svg>
<svg style="left:1622.4px;top:886.8px;" width="12" height="12" viewBox="0 0 12 12"><g fill="#d2d2d2"><path d="M0.4 3.2L4 0.6V2.5H11.4V3.9H4V5.8Z"/><path d="M11.6 8.6L8 6V7.9H0.6V9.3H8V11.2Z"/></g></svg>
<svg style="left:1653px;top:886.4px;" width="12" height="12" viewBox="0 0 12 12"><path d="M3.6 6.6V1.2A0.9 0.9 0 0 1 5.4 1.2V5L9.6 5.8A1.6 1.6 0 0 1 10.8 7.6L10.4 11.6H4.6L1 8A0.9 0.9 0 0 1 2.2 6.8L3.6 8Z" fill="#bcbcbc"/></svg>
<div style="left:1680.2px;top:883px;width:1.6px;height:20px;background:#8a8a8a;"></div>
<svg style="left:1694.4px;top:886.8px;" width="13" height="12" viewBox="0 0 13 12"><g fill="#d2d2d2"><rect x="0" y="0" width="2.4" height="11.2"/><rect x="3.3" y="0" width="2.6" height="11.2"/><rect x="6.8" y="0" width="2.6" height="11.2"/><rect x="10.2" y="0" width="1.8" height="11.2"/></g><g fill="#2e2e2e"><rect x="2" y="0" width="1.7" height="6.6"/><rect x="5.5" y="0" width="1.7" height="6.6"/><rect x="9" y="0" width="1.6" height="6.6"/></g></svg>
</div></body></html>
